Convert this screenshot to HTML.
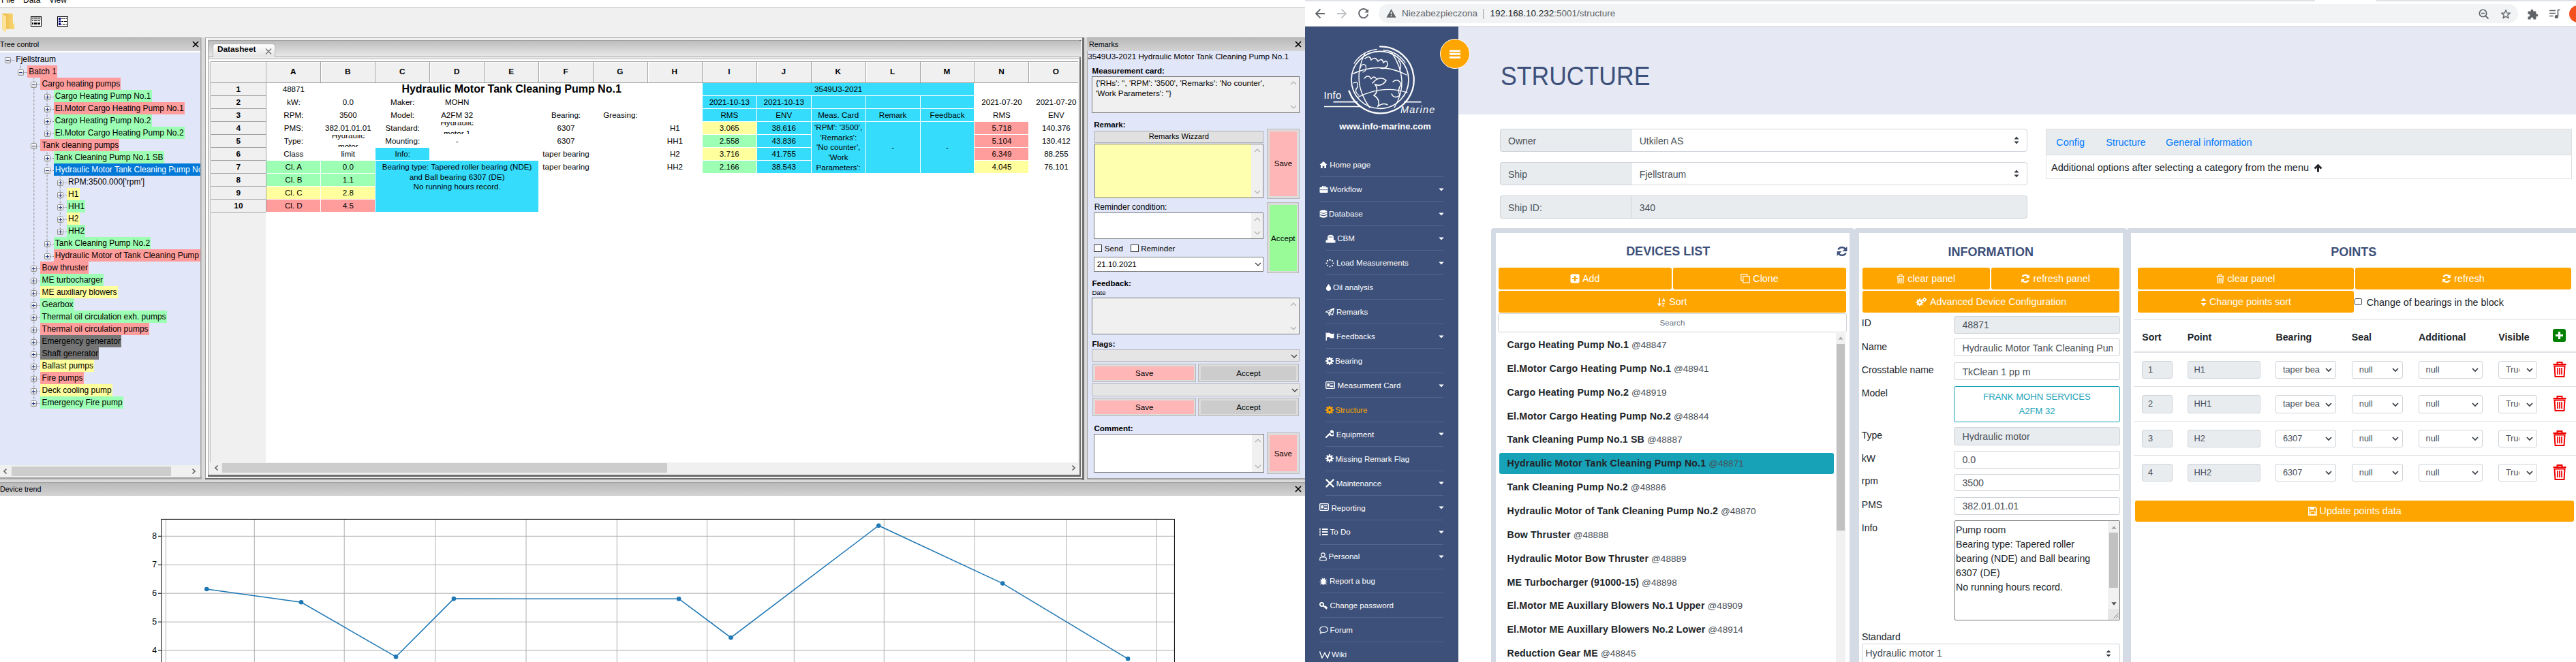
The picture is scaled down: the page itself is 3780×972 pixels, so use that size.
<!DOCTYPE html>
<html><head><meta charset="utf-8"><style>
html,body{margin:0;padding:0;width:3780px;height:972px;overflow:hidden;background:#fff}
body{position:relative;font-family:"Liberation Sans",sans-serif;color:#000}
body div, body svg{position:absolute}
</style></head><body>
<div style="left:0px;top:0px;width:1915px;height:972px;background:#f0f0f0"></div>
<div style="left:0px;top:0px;width:1915px;height:11px;background:#ffffff"></div>
<div style="left:0px;top:11px;width:1915px;height:1px;background:#b4b4b4"></div>
<div style="left:2px;top:-6px;font-size:12px;line-height:12px;color:#000">File</div>
<div style="left:34px;top:-6px;font-size:12px;line-height:12px;color:#000">Data</div>
<div style="left:72px;top:-6px;font-size:12px;line-height:12px;color:#000">View</div>
<svg style="left:0px;top:14px" width="24" height="36" viewBox="0 14 24 36">
<defs><linearGradient id="fg" x1="0" y1="0" x2="1" y2="0"><stop offset="0" stop-color="#e9b845"/><stop offset="1" stop-color="#f9d877"/></linearGradient></defs>
<path d="M3.4 19.7 H18.9 V33.8 L21.2 35.5 V42.7 H8.5 V47 L3.4 43 Z" fill="url(#fg)"/>
<path d="M3.4 19.7 L9 24.5 V47 L3.4 43 Z" fill="#fde39a"/>
</svg>
<svg style="left:44px;top:23px" width="18" height="17" viewBox="44 23 18 17" shape-rendering="crispEdges">
<rect x="45" y="24" width="16" height="15" fill="#000"/>
<rect x="46" y="25" width="14" height="13" fill="#fff"/>
<rect x="46" y="25" width="14" height="4" fill="#c8c8c8"/>
<g fill="#000"><rect x="47" y="26" width="2" height="1"/><rect x="50" y="26" width="4" height="1"/><rect x="55" y="26" width="4" height="1"/>
<rect x="47" y="30" width="2" height="1"/><rect x="50" y="30" width="4" height="1"/><rect x="55" y="30" width="4" height="1"/>
<rect x="47" y="32" width="2" height="1"/><rect x="50" y="32" width="4" height="1"/><rect x="55" y="32" width="4" height="1"/>
<rect x="47" y="34" width="2" height="1"/><rect x="50" y="34" width="4" height="1"/><rect x="55" y="34" width="4" height="1"/>
<rect x="47" y="36" width="2" height="1"/><rect x="50" y="36" width="4" height="1"/><rect x="55" y="36" width="4" height="1"/></g>
</svg>
<svg style="left:83px;top:23px" width="18" height="17" viewBox="83 23 18 17" shape-rendering="crispEdges">
<rect x="84" y="24" width="16" height="15" fill="#000"/>
<rect x="85" y="25" width="14" height="13" fill="#fff"/>
<g fill="#000080"><rect x="86" y="26" width="3" height="3"/><rect x="86" y="30" width="3" height="3"/><rect x="86" y="34" width="3" height="3"/></g>
<g fill="#000"><rect x="90" y="27" width="2" height="1"/><rect x="93" y="27" width="3" height="1"/><rect x="97" y="27" width="1" height="1"/>
<rect x="90" y="31" width="3" height="1"/><rect x="94" y="31" width="4" height="1"/>
<rect x="90" y="35" width="1" height="1"/><rect x="92" y="35" width="4" height="1"/><rect x="97" y="35" width="1" height="1"/></g>
</svg>
<div style="left:0px;top:55px;width:1915px;height:917px;background:#dadada"></div>
<div style="left:0px;top:55px;width:296px;height:20px;background:linear-gradient(#b9b9b9,#d3d3d3);border-top:1px solid #a0a0a0;box-sizing:border-box"></div>
<div style="left:0px;top:59.60px;height:10.8px;line-height:10.8px;font-size:10.8px;white-space:pre;color:#000">Tree control</div>
<svg style="left:282px;top:60px" width="10" height="10" viewBox="0 0 10 10"><path d="M1 1 L9 9 M9 1 L1 9" stroke="#000" stroke-width="1.7"/></svg>
<div style="left:0px;top:75px;width:294px;height:608px;background:#e1e6f8"></div>
<div style="left:0px;top:75px;width:294px;height:1.5px;background:#ffffff"></div>
<div style="left:294px;top:55px;width:2px;height:649px;background:linear-gradient(90deg,#9a9a9a,#c8c8c8)"></div>
<div style="left:0px;top:683px;width:294px;height:18px;background:#f0f0f0"></div>
<div style="left:17px;top:685px;width:234px;height:14px;background:#cdcdcd"></div>
<svg style="left:3px;top:687px" width="10" height="10" viewBox="0 0 10 10"><path d="M6.5 1.5 L3 5 L6.5 8.5" stroke="#606060" stroke-width="1.6" fill="none"/></svg>
<svg style="left:279px;top:687px" width="10" height="10" viewBox="0 0 10 10"><path d="M3.5 1.5 L7 5 L3.5 8.5" stroke="#606060" stroke-width="1.6" fill="none"/></svg>
<div style="left:0px;top:701px;width:296px;height:3px;background:linear-gradient(#8c8c8c,#c0c0c0)"></div>
<div style="left:0;top:75px;width:294px;height:608px;overflow:hidden">
<svg style="left:0;top:0" width="294" height="608"><line x1="16.3" y1="13.5" x2="21.3" y2="13.5" stroke="#808080" stroke-dasharray="1 1"/><line x1="35.55" y1="31.5" x2="40.55" y2="31.5" stroke="#808080" stroke-dasharray="1 1"/><line x1="54.8" y1="49.5" x2="59.8" y2="49.5" stroke="#808080" stroke-dasharray="1 1"/><line x1="74.05" y1="67.5" x2="79.05" y2="67.5" stroke="#808080" stroke-dasharray="1 1"/><line x1="74.05" y1="85.5" x2="79.05" y2="85.5" stroke="#808080" stroke-dasharray="1 1"/><line x1="74.05" y1="103.5" x2="79.05" y2="103.5" stroke="#808080" stroke-dasharray="1 1"/><line x1="74.05" y1="121.5" x2="79.05" y2="121.5" stroke="#808080" stroke-dasharray="1 1"/><line x1="54.8" y1="139.5" x2="59.8" y2="139.5" stroke="#808080" stroke-dasharray="1 1"/><line x1="74.05" y1="157.5" x2="79.05" y2="157.5" stroke="#808080" stroke-dasharray="1 1"/><line x1="74.05" y1="175.5" x2="79.05" y2="175.5" stroke="#808080" stroke-dasharray="1 1"/><line x1="93.3" y1="193.5" x2="98.3" y2="193.5" stroke="#808080" stroke-dasharray="1 1"/><line x1="93.3" y1="211.5" x2="98.3" y2="211.5" stroke="#808080" stroke-dasharray="1 1"/><line x1="93.3" y1="229.5" x2="98.3" y2="229.5" stroke="#808080" stroke-dasharray="1 1"/><line x1="93.3" y1="247.5" x2="98.3" y2="247.5" stroke="#808080" stroke-dasharray="1 1"/><line x1="93.3" y1="265.5" x2="98.3" y2="265.5" stroke="#808080" stroke-dasharray="1 1"/><line x1="74.05" y1="283.5" x2="79.05" y2="283.5" stroke="#808080" stroke-dasharray="1 1"/><line x1="74.05" y1="301.5" x2="79.05" y2="301.5" stroke="#808080" stroke-dasharray="1 1"/><line x1="54.8" y1="319.5" x2="59.8" y2="319.5" stroke="#808080" stroke-dasharray="1 1"/><line x1="54.8" y1="337.5" x2="59.8" y2="337.5" stroke="#808080" stroke-dasharray="1 1"/><line x1="54.8" y1="355.5" x2="59.8" y2="355.5" stroke="#808080" stroke-dasharray="1 1"/><line x1="54.8" y1="373.5" x2="59.8" y2="373.5" stroke="#808080" stroke-dasharray="1 1"/><line x1="54.8" y1="391.5" x2="59.8" y2="391.5" stroke="#808080" stroke-dasharray="1 1"/><line x1="54.8" y1="409.5" x2="59.8" y2="409.5" stroke="#808080" stroke-dasharray="1 1"/><line x1="54.8" y1="427.5" x2="59.8" y2="427.5" stroke="#808080" stroke-dasharray="1 1"/><line x1="54.8" y1="445.5" x2="59.8" y2="445.5" stroke="#808080" stroke-dasharray="1 1"/><line x1="54.8" y1="463.5" x2="59.8" y2="463.5" stroke="#808080" stroke-dasharray="1 1"/><line x1="54.8" y1="481.5" x2="59.8" y2="481.5" stroke="#808080" stroke-dasharray="1 1"/><line x1="54.8" y1="499.5" x2="59.8" y2="499.5" stroke="#808080" stroke-dasharray="1 1"/><line x1="54.8" y1="517.5" x2="59.8" y2="517.5" stroke="#808080" stroke-dasharray="1 1"/><line x1="30.55" y1="18" x2="30.55" y2="27" stroke="#808080" stroke-dasharray="1 1"/><line x1="49.8" y1="36" x2="49.8" y2="513" stroke="#808080" stroke-dasharray="1 1"/><line x1="69.05" y1="54" x2="69.05" y2="117" stroke="#808080" stroke-dasharray="1 1"/><line x1="69.05" y1="144" x2="69.05" y2="297" stroke="#808080" stroke-dasharray="1 1"/><line x1="88.3" y1="180" x2="88.3" y2="261" stroke="#808080" stroke-dasharray="1 1"/></svg>
<div style="left:21px;top:3px;height:18px;line-height:18px;font-size:12px;padding:0 1.2px 0 2.3px;color:#000;white-space:pre">Fjellstraum</div>
<svg style="left:6.8px;top:9px" width="9" height="9" viewBox="0 0 9 9"><defs></defs><rect x="0.5" y="0.5" width="8" height="8" rx="1" fill="url(#exg)" stroke="#919191"/><line x1="2" y1="4.5" x2="7" y2="4.5" stroke="#2b3d8f" stroke-width="1"/></svg>
<div style="left:40.0px;top:21px;height:18px;line-height:18px;font-size:12px;padding:0 1.2px 0 2.3px;background:#ff9d9d;color:#000;white-space:pre">Batch 1</div>
<svg style="left:26.05px;top:27px" width="9" height="9" viewBox="0 0 9 9"><defs></defs><rect x="0.5" y="0.5" width="8" height="8" rx="1" fill="url(#exg)" stroke="#919191"/><line x1="2" y1="4.5" x2="7" y2="4.5" stroke="#2b3d8f" stroke-width="1"/></svg>
<div style="left:59.25px;top:39px;height:18px;line-height:18px;font-size:12px;padding:0 1.2px 0 2.3px;background:#ff9d9d;color:#000;white-space:pre">Cargo heating pumps</div>
<svg style="left:45.3px;top:45px" width="9" height="9" viewBox="0 0 9 9"><defs></defs><rect x="0.5" y="0.5" width="8" height="8" rx="1" fill="url(#exg)" stroke="#919191"/><line x1="2" y1="4.5" x2="7" y2="4.5" stroke="#2b3d8f" stroke-width="1"/></svg>
<div style="left:78.5px;top:57px;height:18px;line-height:18px;font-size:12px;padding:0 1.2px 0 2.3px;background:#9dffb4;color:#000;white-space:pre">Cargo Heating Pump No.1</div>
<svg style="left:64.55px;top:63px" width="9" height="9" viewBox="0 0 9 9"><defs></defs><rect x="0.5" y="0.5" width="8" height="8" rx="1" fill="url(#exg)" stroke="#919191"/><line x1="2" y1="4.5" x2="7" y2="4.5" stroke="#2b3d8f" stroke-width="1"/><line x1="4.5" y1="2" x2="4.5" y2="7" stroke="#2b3d8f" stroke-width="1"/></svg>
<div style="left:78.5px;top:75px;height:18px;line-height:18px;font-size:12px;padding:0 1.2px 0 2.3px;background:#ff9d9d;color:#000;white-space:pre">El.Motor Cargo Heating Pump No.1</div>
<svg style="left:64.55px;top:81px" width="9" height="9" viewBox="0 0 9 9"><defs></defs><rect x="0.5" y="0.5" width="8" height="8" rx="1" fill="url(#exg)" stroke="#919191"/><line x1="2" y1="4.5" x2="7" y2="4.5" stroke="#2b3d8f" stroke-width="1"/><line x1="4.5" y1="2" x2="4.5" y2="7" stroke="#2b3d8f" stroke-width="1"/></svg>
<div style="left:78.5px;top:93px;height:18px;line-height:18px;font-size:12px;padding:0 1.2px 0 2.3px;background:#9dffb4;color:#000;white-space:pre">Cargo Heating Pump No.2</div>
<svg style="left:64.55px;top:99px" width="9" height="9" viewBox="0 0 9 9"><defs></defs><rect x="0.5" y="0.5" width="8" height="8" rx="1" fill="url(#exg)" stroke="#919191"/><line x1="2" y1="4.5" x2="7" y2="4.5" stroke="#2b3d8f" stroke-width="1"/><line x1="4.5" y1="2" x2="4.5" y2="7" stroke="#2b3d8f" stroke-width="1"/></svg>
<div style="left:78.5px;top:111px;height:18px;line-height:18px;font-size:12px;padding:0 1.2px 0 2.3px;background:#9dffb4;color:#000;white-space:pre">El.Motor Cargo Heating Pump No.2</div>
<svg style="left:64.55px;top:117px" width="9" height="9" viewBox="0 0 9 9"><defs></defs><rect x="0.5" y="0.5" width="8" height="8" rx="1" fill="url(#exg)" stroke="#919191"/><line x1="2" y1="4.5" x2="7" y2="4.5" stroke="#2b3d8f" stroke-width="1"/><line x1="4.5" y1="2" x2="4.5" y2="7" stroke="#2b3d8f" stroke-width="1"/></svg>
<div style="left:59.25px;top:129px;height:18px;line-height:18px;font-size:12px;padding:0 1.2px 0 2.3px;background:#ff9d9d;color:#000;white-space:pre">Tank cleaning pumps</div>
<svg style="left:45.3px;top:135px" width="9" height="9" viewBox="0 0 9 9"><defs></defs><rect x="0.5" y="0.5" width="8" height="8" rx="1" fill="url(#exg)" stroke="#919191"/><line x1="2" y1="4.5" x2="7" y2="4.5" stroke="#2b3d8f" stroke-width="1"/></svg>
<div style="left:78.5px;top:147px;height:18px;line-height:18px;font-size:12px;padding:0 1.2px 0 2.3px;background:#9dffb4;color:#000;white-space:pre">Tank Cleaning Pump No.1 SB</div>
<svg style="left:64.55px;top:153px" width="9" height="9" viewBox="0 0 9 9"><defs></defs><rect x="0.5" y="0.5" width="8" height="8" rx="1" fill="url(#exg)" stroke="#919191"/><line x1="2" y1="4.5" x2="7" y2="4.5" stroke="#2b3d8f" stroke-width="1"/><line x1="4.5" y1="2" x2="4.5" y2="7" stroke="#2b3d8f" stroke-width="1"/></svg>
<div style="left:78.5px;top:165px;height:18px;line-height:18px;font-size:12px;padding:0 1.2px 0 2.3px;background:#0078d7;color:#fff;white-space:pre">Hydraulic Motor Tank Cleaning Pump No.1</div>
<svg style="left:64.55px;top:171px" width="9" height="9" viewBox="0 0 9 9"><defs></defs><rect x="0.5" y="0.5" width="8" height="8" rx="1" fill="url(#exg)" stroke="#919191"/><line x1="2" y1="4.5" x2="7" y2="4.5" stroke="#2b3d8f" stroke-width="1"/></svg>
<div style="left:97.75px;top:183px;height:18px;line-height:18px;font-size:12px;padding:0 1.2px 0 2.3px;color:#000;white-space:pre">RPM:3500.000['rpm']</div>
<svg style="left:83.8px;top:189px" width="9" height="9" viewBox="0 0 9 9"><defs></defs><rect x="0.5" y="0.5" width="8" height="8" rx="1" fill="url(#exg)" stroke="#919191"/><line x1="2" y1="4.5" x2="7" y2="4.5" stroke="#2b3d8f" stroke-width="1"/><line x1="4.5" y1="2" x2="4.5" y2="7" stroke="#2b3d8f" stroke-width="1"/></svg>
<div style="left:97.75px;top:201px;height:18px;line-height:18px;font-size:12px;padding:0 1.2px 0 2.3px;background:#ffff9d;color:#000;white-space:pre">H1</div>
<svg style="left:83.8px;top:207px" width="9" height="9" viewBox="0 0 9 9"><defs></defs><rect x="0.5" y="0.5" width="8" height="8" rx="1" fill="url(#exg)" stroke="#919191"/><line x1="2" y1="4.5" x2="7" y2="4.5" stroke="#2b3d8f" stroke-width="1"/><line x1="4.5" y1="2" x2="4.5" y2="7" stroke="#2b3d8f" stroke-width="1"/></svg>
<div style="left:97.75px;top:219px;height:18px;line-height:18px;font-size:12px;padding:0 1.2px 0 2.3px;background:#9dffb4;color:#000;white-space:pre">HH1</div>
<svg style="left:83.8px;top:225px" width="9" height="9" viewBox="0 0 9 9"><defs></defs><rect x="0.5" y="0.5" width="8" height="8" rx="1" fill="url(#exg)" stroke="#919191"/><line x1="2" y1="4.5" x2="7" y2="4.5" stroke="#2b3d8f" stroke-width="1"/><line x1="4.5" y1="2" x2="4.5" y2="7" stroke="#2b3d8f" stroke-width="1"/></svg>
<div style="left:97.75px;top:237px;height:18px;line-height:18px;font-size:12px;padding:0 1.2px 0 2.3px;background:#ffff9d;color:#000;white-space:pre">H2</div>
<svg style="left:83.8px;top:243px" width="9" height="9" viewBox="0 0 9 9"><defs></defs><rect x="0.5" y="0.5" width="8" height="8" rx="1" fill="url(#exg)" stroke="#919191"/><line x1="2" y1="4.5" x2="7" y2="4.5" stroke="#2b3d8f" stroke-width="1"/><line x1="4.5" y1="2" x2="4.5" y2="7" stroke="#2b3d8f" stroke-width="1"/></svg>
<div style="left:97.75px;top:255px;height:18px;line-height:18px;font-size:12px;padding:0 1.2px 0 2.3px;background:#9dffb4;color:#000;white-space:pre">HH2</div>
<svg style="left:83.8px;top:261px" width="9" height="9" viewBox="0 0 9 9"><defs></defs><rect x="0.5" y="0.5" width="8" height="8" rx="1" fill="url(#exg)" stroke="#919191"/><line x1="2" y1="4.5" x2="7" y2="4.5" stroke="#2b3d8f" stroke-width="1"/><line x1="4.5" y1="2" x2="4.5" y2="7" stroke="#2b3d8f" stroke-width="1"/></svg>
<div style="left:78.5px;top:273px;height:18px;line-height:18px;font-size:12px;padding:0 1.2px 0 2.3px;background:#9dffb4;color:#000;white-space:pre">Tank Cleaning Pump No.2</div>
<svg style="left:64.55px;top:279px" width="9" height="9" viewBox="0 0 9 9"><defs></defs><rect x="0.5" y="0.5" width="8" height="8" rx="1" fill="url(#exg)" stroke="#919191"/><line x1="2" y1="4.5" x2="7" y2="4.5" stroke="#2b3d8f" stroke-width="1"/><line x1="4.5" y1="2" x2="4.5" y2="7" stroke="#2b3d8f" stroke-width="1"/></svg>
<div style="left:78.5px;top:291px;height:18px;line-height:18px;font-size:12px;padding:0 1.2px 0 2.3px;background:#ff9d9d;color:#000;white-space:pre">Hydraulic Motor of Tank Cleaning Pump No.2</div>
<svg style="left:64.55px;top:297px" width="9" height="9" viewBox="0 0 9 9"><defs></defs><rect x="0.5" y="0.5" width="8" height="8" rx="1" fill="url(#exg)" stroke="#919191"/><line x1="2" y1="4.5" x2="7" y2="4.5" stroke="#2b3d8f" stroke-width="1"/><line x1="4.5" y1="2" x2="4.5" y2="7" stroke="#2b3d8f" stroke-width="1"/></svg>
<div style="left:59.25px;top:309px;height:18px;line-height:18px;font-size:12px;padding:0 1.2px 0 2.3px;background:#ff9d9d;color:#000;white-space:pre">Bow thruster</div>
<svg style="left:45.3px;top:315px" width="9" height="9" viewBox="0 0 9 9"><defs></defs><rect x="0.5" y="0.5" width="8" height="8" rx="1" fill="url(#exg)" stroke="#919191"/><line x1="2" y1="4.5" x2="7" y2="4.5" stroke="#2b3d8f" stroke-width="1"/><line x1="4.5" y1="2" x2="4.5" y2="7" stroke="#2b3d8f" stroke-width="1"/></svg>
<div style="left:59.25px;top:327px;height:18px;line-height:18px;font-size:12px;padding:0 1.2px 0 2.3px;background:#9dffb4;color:#000;white-space:pre">ME turbocharger</div>
<svg style="left:45.3px;top:333px" width="9" height="9" viewBox="0 0 9 9"><defs></defs><rect x="0.5" y="0.5" width="8" height="8" rx="1" fill="url(#exg)" stroke="#919191"/><line x1="2" y1="4.5" x2="7" y2="4.5" stroke="#2b3d8f" stroke-width="1"/><line x1="4.5" y1="2" x2="4.5" y2="7" stroke="#2b3d8f" stroke-width="1"/></svg>
<div style="left:59.25px;top:345px;height:18px;line-height:18px;font-size:12px;padding:0 1.2px 0 2.3px;background:#ffff9d;color:#000;white-space:pre">ME auxiliary blowers</div>
<svg style="left:45.3px;top:351px" width="9" height="9" viewBox="0 0 9 9"><defs></defs><rect x="0.5" y="0.5" width="8" height="8" rx="1" fill="url(#exg)" stroke="#919191"/><line x1="2" y1="4.5" x2="7" y2="4.5" stroke="#2b3d8f" stroke-width="1"/><line x1="4.5" y1="2" x2="4.5" y2="7" stroke="#2b3d8f" stroke-width="1"/></svg>
<div style="left:59.25px;top:363px;height:18px;line-height:18px;font-size:12px;padding:0 1.2px 0 2.3px;background:#9dffb4;color:#000;white-space:pre">Gearbox</div>
<svg style="left:45.3px;top:369px" width="9" height="9" viewBox="0 0 9 9"><defs></defs><rect x="0.5" y="0.5" width="8" height="8" rx="1" fill="url(#exg)" stroke="#919191"/><line x1="2" y1="4.5" x2="7" y2="4.5" stroke="#2b3d8f" stroke-width="1"/><line x1="4.5" y1="2" x2="4.5" y2="7" stroke="#2b3d8f" stroke-width="1"/></svg>
<div style="left:59.25px;top:381px;height:18px;line-height:18px;font-size:12px;padding:0 1.2px 0 2.3px;background:#9dffb4;color:#000;white-space:pre">Thermal oil circulation exh. pumps</div>
<svg style="left:45.3px;top:387px" width="9" height="9" viewBox="0 0 9 9"><defs></defs><rect x="0.5" y="0.5" width="8" height="8" rx="1" fill="url(#exg)" stroke="#919191"/><line x1="2" y1="4.5" x2="7" y2="4.5" stroke="#2b3d8f" stroke-width="1"/><line x1="4.5" y1="2" x2="4.5" y2="7" stroke="#2b3d8f" stroke-width="1"/></svg>
<div style="left:59.25px;top:399px;height:18px;line-height:18px;font-size:12px;padding:0 1.2px 0 2.3px;background:#ff9d9d;color:#000;white-space:pre">Thermal oil circulation pumps</div>
<svg style="left:45.3px;top:405px" width="9" height="9" viewBox="0 0 9 9"><defs></defs><rect x="0.5" y="0.5" width="8" height="8" rx="1" fill="url(#exg)" stroke="#919191"/><line x1="2" y1="4.5" x2="7" y2="4.5" stroke="#2b3d8f" stroke-width="1"/><line x1="4.5" y1="2" x2="4.5" y2="7" stroke="#2b3d8f" stroke-width="1"/></svg>
<div style="left:59.25px;top:417px;height:18px;line-height:18px;font-size:12px;padding:0 1.2px 0 2.3px;background:#757575;color:#000;white-space:pre">Emergency generator</div>
<svg style="left:45.3px;top:423px" width="9" height="9" viewBox="0 0 9 9"><defs></defs><rect x="0.5" y="0.5" width="8" height="8" rx="1" fill="url(#exg)" stroke="#919191"/><line x1="2" y1="4.5" x2="7" y2="4.5" stroke="#2b3d8f" stroke-width="1"/><line x1="4.5" y1="2" x2="4.5" y2="7" stroke="#2b3d8f" stroke-width="1"/></svg>
<div style="left:59.25px;top:435px;height:18px;line-height:18px;font-size:12px;padding:0 1.2px 0 2.3px;background:#757575;color:#000;white-space:pre">Shaft generator</div>
<svg style="left:45.3px;top:441px" width="9" height="9" viewBox="0 0 9 9"><defs></defs><rect x="0.5" y="0.5" width="8" height="8" rx="1" fill="url(#exg)" stroke="#919191"/><line x1="2" y1="4.5" x2="7" y2="4.5" stroke="#2b3d8f" stroke-width="1"/><line x1="4.5" y1="2" x2="4.5" y2="7" stroke="#2b3d8f" stroke-width="1"/></svg>
<div style="left:59.25px;top:453px;height:18px;line-height:18px;font-size:12px;padding:0 1.2px 0 2.3px;background:#ffff9d;color:#000;white-space:pre">Ballast pumps</div>
<svg style="left:45.3px;top:459px" width="9" height="9" viewBox="0 0 9 9"><defs></defs><rect x="0.5" y="0.5" width="8" height="8" rx="1" fill="url(#exg)" stroke="#919191"/><line x1="2" y1="4.5" x2="7" y2="4.5" stroke="#2b3d8f" stroke-width="1"/><line x1="4.5" y1="2" x2="4.5" y2="7" stroke="#2b3d8f" stroke-width="1"/></svg>
<div style="left:59.25px;top:471px;height:18px;line-height:18px;font-size:12px;padding:0 1.2px 0 2.3px;background:#ff9d9d;color:#000;white-space:pre">Fire pumps</div>
<svg style="left:45.3px;top:477px" width="9" height="9" viewBox="0 0 9 9"><defs></defs><rect x="0.5" y="0.5" width="8" height="8" rx="1" fill="url(#exg)" stroke="#919191"/><line x1="2" y1="4.5" x2="7" y2="4.5" stroke="#2b3d8f" stroke-width="1"/><line x1="4.5" y1="2" x2="4.5" y2="7" stroke="#2b3d8f" stroke-width="1"/></svg>
<div style="left:59.25px;top:489px;height:18px;line-height:18px;font-size:12px;padding:0 1.2px 0 2.3px;background:#ffff9d;color:#000;white-space:pre">Deck cooling pump</div>
<svg style="left:45.3px;top:495px" width="9" height="9" viewBox="0 0 9 9"><defs></defs><rect x="0.5" y="0.5" width="8" height="8" rx="1" fill="url(#exg)" stroke="#919191"/><line x1="2" y1="4.5" x2="7" y2="4.5" stroke="#2b3d8f" stroke-width="1"/><line x1="4.5" y1="2" x2="4.5" y2="7" stroke="#2b3d8f" stroke-width="1"/></svg>
<div style="left:59.25px;top:507px;height:18px;line-height:18px;font-size:12px;padding:0 1.2px 0 2.3px;background:#9dffb4;color:#000;white-space:pre">Emergency Fire pump</div>
<svg style="left:45.3px;top:513px" width="9" height="9" viewBox="0 0 9 9"><defs></defs><rect x="0.5" y="0.5" width="8" height="8" rx="1" fill="url(#exg)" stroke="#919191"/><line x1="2" y1="4.5" x2="7" y2="4.5" stroke="#2b3d8f" stroke-width="1"/><line x1="4.5" y1="2" x2="4.5" y2="7" stroke="#2b3d8f" stroke-width="1"/></svg>
</div>
<svg style="left:0;top:0" width="0" height="0"><defs><linearGradient id="exg" x1="0" y1="0" x2="0" y2="1"><stop offset="0" stop-color="#ffffff"/><stop offset="1" stop-color="#d4d4d4"/></linearGradient></defs></svg>
<div style="left:301px;top:55px;width:1290px;height:649px;background:#f0f0f0;border-left:1px solid #a0a0a0;border-top:1px solid #a0a0a0;box-sizing:border-box"></div>
<div style="left:302px;top:56px;width:3px;height:646px;background:#fff"></div>
<div style="left:1588.3px;top:55px;width:2.4px;height:649.5px;background:#707070"></div>
<div style="left:301px;top:702px;width:1290px;height:2.4px;background:#707070"></div>
<div style="left:305px;top:59px;width:1282px;height:641px;border-left:1px solid #a0a0a0;border-top:1px solid #a0a0a0;box-sizing:border-box"></div>
<div style="left:1584.3px;top:59px;width:2px;height:641px;background:#6e6e6e"></div>
<div style="left:305px;top:697.3px;width:1281.3px;height:2.4px;background:#6e6e6e"></div>
<div style="left:306px;top:60px;width:1280px;height:23.3px;background:linear-gradient(#bdbdbd,#e8e8e8)"></div>
<div style="left:306px;top:83px;width:1280px;height:1px;background:#a8a8a8"></div>
<div style="left:306px;top:86px;width:1280px;height:1px;background:#a8a8a8"></div>
<div style="left:311.5px;top:63.7px;width:92px;height:20px;box-sizing:border-box;border:1px solid #b4b4b4;border-bottom:none;border-radius:4px 4px 0 0;background:linear-gradient(#ffffff,#e4e4e4)"></div>
<div style="left:319px;top:66.60px;height:11.8px;line-height:11.8px;font-size:11.8px;white-space:pre;font-weight:bold;color:#000">Datasheet</div>
<svg style="left:388.5px;top:70.5px" width="10" height="9" viewBox="0 0 10 9"><path d="M1 0.5 L9 8.5 M9 0.5 L1 8.5" stroke="#6e6e6e" stroke-width="1.2"/></svg>
<div style="left:309.4px;top:89.9px;width:1272.6px;height:589.1px;background:#ffffff"></div>
<div style="left:309.4px;top:89.9px;width:1px;height:589.1px;background:#a0a0a0"></div>
<div style="left:309.4px;top:89.9px;width:1272.6px;height:1px;background:#a0a0a0"></div>
<div style="left:310.4px;top:90.9px;width:80.0px;height:588.1px;background:#f0f0f0"></div>
<div style="left:390.4px;top:90.9px;width:1191.6px;height:30.39999999999999px;background:#f0f0f0"></div>
<div style="left:306px;top:86.5px;width:1278px;height:3.4000000000000057px;background:#fff"></div>
<div style="left:310.4px;top:90.9px;width:1271.6px;height:1px;background:#fff"></div>
<div style="left:310.4px;top:90.9px;width:1px;height:588.1px;background:#fff"></div>
<div style="left:390.4px;top:89.9px;width:1px;height:31.39999999999999px;background:#a0a0a0"></div>
<div style="left:391.4px;top:90.9px;width:1px;height:29.39999999999999px;background:#fff"></div>
<div style="left:390.4px;top:100.10px;height:11.8px;line-height:11.8px;font-size:11.8px;white-space:pre;width:79.93px;text-align:center;font-weight:bold">A</div>
<div style="left:470.33px;top:89.9px;width:1px;height:31.39999999999999px;background:#a0a0a0"></div>
<div style="left:471.33px;top:90.9px;width:1px;height:29.39999999999999px;background:#fff"></div>
<div style="left:470.33px;top:100.10px;height:11.8px;line-height:11.8px;font-size:11.8px;white-space:pre;width:79.93px;text-align:center;font-weight:bold">B</div>
<div style="left:550.26px;top:89.9px;width:1px;height:31.39999999999999px;background:#a0a0a0"></div>
<div style="left:551.26px;top:90.9px;width:1px;height:29.39999999999999px;background:#fff"></div>
<div style="left:550.26px;top:100.10px;height:11.8px;line-height:11.8px;font-size:11.8px;white-space:pre;width:79.93000000000006px;text-align:center;font-weight:bold">C</div>
<div style="left:630.19px;top:89.9px;width:1px;height:31.39999999999999px;background:#a0a0a0"></div>
<div style="left:631.19px;top:90.9px;width:1px;height:29.39999999999999px;background:#fff"></div>
<div style="left:630.19px;top:100.10px;height:11.8px;line-height:11.8px;font-size:11.8px;white-space:pre;width:79.93000000000006px;text-align:center;font-weight:bold">D</div>
<div style="left:710.12px;top:89.9px;width:1px;height:31.39999999999999px;background:#a0a0a0"></div>
<div style="left:711.12px;top:90.9px;width:1px;height:29.39999999999999px;background:#fff"></div>
<div style="left:710.12px;top:100.10px;height:11.8px;line-height:11.8px;font-size:11.8px;white-space:pre;width:79.92999999999995px;text-align:center;font-weight:bold">E</div>
<div style="left:790.05px;top:89.9px;width:1px;height:31.39999999999999px;background:#a0a0a0"></div>
<div style="left:791.05px;top:90.9px;width:1px;height:29.39999999999999px;background:#fff"></div>
<div style="left:790.05px;top:100.10px;height:11.8px;line-height:11.8px;font-size:11.8px;white-space:pre;width:79.93000000000006px;text-align:center;font-weight:bold">F</div>
<div style="left:869.98px;top:89.9px;width:1px;height:31.39999999999999px;background:#a0a0a0"></div>
<div style="left:870.98px;top:90.9px;width:1px;height:29.39999999999999px;background:#fff"></div>
<div style="left:869.98px;top:100.10px;height:11.8px;line-height:11.8px;font-size:11.8px;white-space:pre;width:79.93000000000006px;text-align:center;font-weight:bold">G</div>
<div style="left:949.91px;top:89.9px;width:1px;height:31.39999999999999px;background:#a0a0a0"></div>
<div style="left:950.91px;top:90.9px;width:1px;height:29.39999999999999px;background:#fff"></div>
<div style="left:949.91px;top:100.10px;height:11.8px;line-height:11.8px;font-size:11.8px;white-space:pre;width:79.92999999999995px;text-align:center;font-weight:bold">H</div>
<div style="left:1029.8400000000001px;top:89.9px;width:1px;height:31.39999999999999px;background:#a0a0a0"></div>
<div style="left:1030.8400000000001px;top:90.9px;width:1px;height:29.39999999999999px;background:#fff"></div>
<div style="left:1029.8400000000001px;top:100.10px;height:11.8px;line-height:11.8px;font-size:11.8px;white-space:pre;width:79.93000000000006px;text-align:center;font-weight:bold">I</div>
<div style="left:1109.77px;top:89.9px;width:1px;height:31.39999999999999px;background:#a0a0a0"></div>
<div style="left:1110.77px;top:90.9px;width:1px;height:29.39999999999999px;background:#fff"></div>
<div style="left:1109.77px;top:100.10px;height:11.8px;line-height:11.8px;font-size:11.8px;white-space:pre;width:79.93000000000006px;text-align:center;font-weight:bold">J</div>
<div style="left:1189.7px;top:89.9px;width:1px;height:31.39999999999999px;background:#a0a0a0"></div>
<div style="left:1190.7px;top:90.9px;width:1px;height:29.39999999999999px;background:#fff"></div>
<div style="left:1189.7px;top:100.10px;height:11.8px;line-height:11.8px;font-size:11.8px;white-space:pre;width:79.93000000000006px;text-align:center;font-weight:bold">K</div>
<div style="left:1269.63px;top:89.9px;width:1px;height:31.39999999999999px;background:#a0a0a0"></div>
<div style="left:1270.63px;top:90.9px;width:1px;height:29.39999999999999px;background:#fff"></div>
<div style="left:1269.63px;top:100.10px;height:11.8px;line-height:11.8px;font-size:11.8px;white-space:pre;width:79.93000000000006px;text-align:center;font-weight:bold">L</div>
<div style="left:1349.56px;top:89.9px;width:1px;height:31.39999999999999px;background:#a0a0a0"></div>
<div style="left:1350.56px;top:90.9px;width:1px;height:29.39999999999999px;background:#fff"></div>
<div style="left:1349.56px;top:100.10px;height:11.8px;line-height:11.8px;font-size:11.8px;white-space:pre;width:79.93000000000006px;text-align:center;font-weight:bold">M</div>
<div style="left:1429.4900000000002px;top:89.9px;width:1px;height:31.39999999999999px;background:#a0a0a0"></div>
<div style="left:1430.4900000000002px;top:90.9px;width:1px;height:29.39999999999999px;background:#fff"></div>
<div style="left:1429.4900000000002px;top:100.10px;height:11.8px;line-height:11.8px;font-size:11.8px;white-space:pre;width:79.93000000000006px;text-align:center;font-weight:bold">N</div>
<div style="left:1509.42px;top:89.9px;width:1px;height:31.39999999999999px;background:#a0a0a0"></div>
<div style="left:1510.42px;top:90.9px;width:1px;height:29.39999999999999px;background:#fff"></div>
<div style="left:1509.42px;top:100.10px;height:11.8px;line-height:11.8px;font-size:11.8px;white-space:pre;width:79.93000000000006px;text-align:center;font-weight:bold">O</div>
<div style="left:309.4px;top:121.3px;width:1272.6px;height:1px;background:#a0a0a0"></div>
<div style="left:309.4px;top:140.3px;width:81.0px;height:1px;background:#a0a0a0"></div>
<div style="left:309.4px;top:125.90px;height:11.8px;line-height:11.8px;font-size:11.8px;white-space:pre;width:81.0px;text-align:center;font-weight:bold">1</div>
<div style="left:309.4px;top:159.3px;width:81.0px;height:1px;background:#a0a0a0"></div>
<div style="left:309.4px;top:144.90px;height:11.8px;line-height:11.8px;font-size:11.8px;white-space:pre;width:81.0px;text-align:center;font-weight:bold">2</div>
<div style="left:309.4px;top:178.3px;width:81.0px;height:1px;background:#a0a0a0"></div>
<div style="left:309.4px;top:163.90px;height:11.8px;line-height:11.8px;font-size:11.8px;white-space:pre;width:81.0px;text-align:center;font-weight:bold">3</div>
<div style="left:309.4px;top:197.3px;width:81.0px;height:1px;background:#a0a0a0"></div>
<div style="left:309.4px;top:182.90px;height:11.8px;line-height:11.8px;font-size:11.8px;white-space:pre;width:81.0px;text-align:center;font-weight:bold">4</div>
<div style="left:309.4px;top:216.3px;width:81.0px;height:1px;background:#a0a0a0"></div>
<div style="left:309.4px;top:201.90px;height:11.8px;line-height:11.8px;font-size:11.8px;white-space:pre;width:81.0px;text-align:center;font-weight:bold">5</div>
<div style="left:309.4px;top:235.3px;width:81.0px;height:1px;background:#a0a0a0"></div>
<div style="left:309.4px;top:220.90px;height:11.8px;line-height:11.8px;font-size:11.8px;white-space:pre;width:81.0px;text-align:center;font-weight:bold">6</div>
<div style="left:309.4px;top:254.3px;width:81.0px;height:1px;background:#a0a0a0"></div>
<div style="left:309.4px;top:239.90px;height:11.8px;line-height:11.8px;font-size:11.8px;white-space:pre;width:81.0px;text-align:center;font-weight:bold">7</div>
<div style="left:309.4px;top:273.3px;width:81.0px;height:1px;background:#a0a0a0"></div>
<div style="left:309.4px;top:258.90px;height:11.8px;line-height:11.8px;font-size:11.8px;white-space:pre;width:81.0px;text-align:center;font-weight:bold">8</div>
<div style="left:309.4px;top:292.3px;width:81.0px;height:1px;background:#a0a0a0"></div>
<div style="left:309.4px;top:277.90px;height:11.8px;line-height:11.8px;font-size:11.8px;white-space:pre;width:81.0px;text-align:center;font-weight:bold">9</div>
<div style="left:309.4px;top:311.3px;width:81.0px;height:1px;background:#a0a0a0"></div>
<div style="left:309.4px;top:296.90px;height:11.8px;line-height:11.8px;font-size:11.8px;white-space:pre;width:81.0px;text-align:center;font-weight:bold">10</div>
<div style="left:390.4px;top:89.9px;width:1px;height:221.4px;background:#a0a0a0"></div>
<div style="left:391.40px;top:122.30px;width:78.93px;height:18.00px;display:flex;align-items:center;justify-content:center;text-align:center;font-size:11.6px;line-height:14.8px;overflow:hidden;"><span>48871</span></div>
<div style="left:471.33px;top:122.30px;width:558.51px;height:18.00px;display:flex;align-items:center;justify-content:center;text-align:center;font-size:16px;line-height:14.8px;overflow:hidden;font-weight:bold;white-space:nowrap"><span>Hydraulic Motor Tank Cleaning Pump No.1</span></div>
<div style="left:1030.84px;top:122.30px;width:398.65px;height:18.00px;background:#35dcfc;display:flex;align-items:center;justify-content:center;text-align:center;font-size:11.6px;line-height:14.8px;overflow:hidden;"><span>3549U3-2021</span></div>
<div style="left:391.40px;top:141.30px;width:78.93px;height:18.00px;display:flex;align-items:center;justify-content:center;text-align:center;font-size:11.6px;line-height:14.8px;overflow:hidden;"><span>kW:</span></div>
<div style="left:471.33px;top:141.30px;width:78.93px;height:18.00px;display:flex;align-items:center;justify-content:center;text-align:center;font-size:11.6px;line-height:14.8px;overflow:hidden;"><span>0.0</span></div>
<div style="left:551.26px;top:141.30px;width:78.93px;height:18.00px;display:flex;align-items:center;justify-content:center;text-align:center;font-size:11.6px;line-height:14.8px;overflow:hidden;"><span>Maker:</span></div>
<div style="left:631.19px;top:141.30px;width:78.93px;height:18.00px;display:flex;align-items:center;justify-content:center;text-align:center;font-size:11.6px;line-height:14.8px;overflow:hidden;"><span>MOHN</span></div>
<div style="left:1030.84px;top:141.30px;width:78.93px;height:18.00px;background:#35dcfc;display:flex;align-items:center;justify-content:center;text-align:center;font-size:11.6px;line-height:14.8px;overflow:hidden;"><span>2021-10-13</span></div>
<div style="left:1110.77px;top:141.30px;width:78.93px;height:18.00px;background:#35dcfc;display:flex;align-items:center;justify-content:center;text-align:center;font-size:11.6px;line-height:14.8px;overflow:hidden;"><span>2021-10-13</span></div>
<div style="left:1190.70px;top:141.30px;width:78.93px;height:18.00px;background:#35dcfc;display:flex;align-items:center;justify-content:center;text-align:center;font-size:11.6px;line-height:14.8px;overflow:hidden;"><span></span></div>
<div style="left:1270.63px;top:141.30px;width:78.93px;height:18.00px;background:#35dcfc;display:flex;align-items:center;justify-content:center;text-align:center;font-size:11.6px;line-height:14.8px;overflow:hidden;"><span></span></div>
<div style="left:1350.56px;top:141.30px;width:78.93px;height:18.00px;background:#35dcfc;display:flex;align-items:center;justify-content:center;text-align:center;font-size:11.6px;line-height:14.8px;overflow:hidden;"><span></span></div>
<div style="left:1430.49px;top:141.30px;width:78.93px;height:18.00px;display:flex;align-items:center;justify-content:center;text-align:center;font-size:11.6px;line-height:14.8px;overflow:hidden;"><span>2021-07-20</span></div>
<div style="left:1510.42px;top:141.30px;width:78.93px;height:18.00px;display:flex;align-items:center;justify-content:center;text-align:center;font-size:11.6px;line-height:14.8px;overflow:hidden;"><span>2021-07-20</span></div>
<div style="left:391.40px;top:160.30px;width:78.93px;height:18.00px;display:flex;align-items:center;justify-content:center;text-align:center;font-size:11.6px;line-height:14.8px;overflow:hidden;"><span>RPM:</span></div>
<div style="left:471.33px;top:160.30px;width:78.93px;height:18.00px;display:flex;align-items:center;justify-content:center;text-align:center;font-size:11.6px;line-height:14.8px;overflow:hidden;"><span>3500</span></div>
<div style="left:551.26px;top:160.30px;width:78.93px;height:18.00px;display:flex;align-items:center;justify-content:center;text-align:center;font-size:11.6px;line-height:14.8px;overflow:hidden;"><span>Model:</span></div>
<div style="left:631.19px;top:160.30px;width:78.93px;height:18.00px;display:flex;align-items:center;justify-content:center;text-align:center;font-size:11.6px;line-height:14.8px;overflow:hidden;"><span>A2FM 32</span></div>
<div style="left:791.05px;top:160.30px;width:78.93px;height:18.00px;display:flex;align-items:center;justify-content:center;text-align:center;font-size:11.6px;line-height:14.8px;overflow:hidden;"><span>Bearing:</span></div>
<div style="left:870.98px;top:160.30px;width:78.93px;height:18.00px;display:flex;align-items:center;justify-content:center;text-align:center;font-size:11.6px;line-height:14.8px;overflow:hidden;"><span>Greasing:</span></div>
<div style="left:1030.84px;top:160.30px;width:78.93px;height:18.00px;background:#35dcfc;display:flex;align-items:center;justify-content:center;text-align:center;font-size:11.6px;line-height:14.8px;overflow:hidden;"><span>RMS</span></div>
<div style="left:1110.77px;top:160.30px;width:78.93px;height:18.00px;background:#35dcfc;display:flex;align-items:center;justify-content:center;text-align:center;font-size:11.6px;line-height:14.8px;overflow:hidden;"><span>ENV</span></div>
<div style="left:1190.70px;top:160.30px;width:78.93px;height:18.00px;background:#35dcfc;display:flex;align-items:center;justify-content:center;text-align:center;font-size:11.6px;line-height:14.8px;overflow:hidden;"><span>Meas. Card</span></div>
<div style="left:1270.63px;top:160.30px;width:78.93px;height:18.00px;background:#35dcfc;display:flex;align-items:center;justify-content:center;text-align:center;font-size:11.6px;line-height:14.8px;overflow:hidden;"><span>Remark</span></div>
<div style="left:1350.56px;top:160.30px;width:78.93px;height:18.00px;background:#35dcfc;display:flex;align-items:center;justify-content:center;text-align:center;font-size:11.6px;line-height:14.8px;overflow:hidden;"><span>Feedback</span></div>
<div style="left:1430.49px;top:160.30px;width:78.93px;height:18.00px;display:flex;align-items:center;justify-content:center;text-align:center;font-size:11.6px;line-height:14.8px;overflow:hidden;"><span>RMS</span></div>
<div style="left:1510.42px;top:160.30px;width:78.93px;height:18.00px;display:flex;align-items:center;justify-content:center;text-align:center;font-size:11.6px;line-height:14.8px;overflow:hidden;"><span>ENV</span></div>
<div style="left:391.40px;top:179.30px;width:78.93px;height:18.00px;display:flex;align-items:center;justify-content:center;text-align:center;font-size:11.6px;line-height:14.8px;overflow:hidden;"><span>PMS:</span></div>
<div style="left:471.33px;top:179.30px;width:78.93px;height:18.00px;display:flex;align-items:center;justify-content:center;text-align:center;font-size:11.6px;line-height:14.8px;overflow:hidden;"><span>382.01.01.01</span></div>
<div style="left:551.26px;top:179.30px;width:78.93px;height:18.00px;display:flex;align-items:center;justify-content:center;text-align:center;font-size:11.6px;line-height:14.8px;overflow:hidden;"><span>Standard:</span></div>
<div style="left:631.19px;top:179.30px;width:78.93px;height:18.00px;display:flex;align-items:center;justify-content:center;text-align:center;font-size:11.6px;line-height:14.8px;overflow:hidden;line-height:16.5px"><span>Hydraulic<br>motor 1</span></div>
<div style="left:791.05px;top:179.30px;width:78.93px;height:18.00px;display:flex;align-items:center;justify-content:center;text-align:center;font-size:11.6px;line-height:14.8px;overflow:hidden;"><span>6307</span></div>
<div style="left:950.91px;top:179.30px;width:78.93px;height:18.00px;display:flex;align-items:center;justify-content:center;text-align:center;font-size:11.6px;line-height:14.8px;overflow:hidden;"><span>H1</span></div>
<div style="left:1030.84px;top:179.30px;width:78.93px;height:18.00px;background:#ffff9d;display:flex;align-items:center;justify-content:center;text-align:center;font-size:11.6px;line-height:14.8px;overflow:hidden;"><span>3.065</span></div>
<div style="left:1110.77px;top:179.30px;width:78.93px;height:18.00px;background:#35dcfc;display:flex;align-items:center;justify-content:center;text-align:center;font-size:11.6px;line-height:14.8px;overflow:hidden;"><span>38.616</span></div>
<div style="left:1190.70px;top:179.30px;width:78.93px;height:75.00px;background:#35dcfc;display:flex;align-items:center;justify-content:center;text-align:center;font-size:11.6px;line-height:14.8px;overflow:hidden;"><span>'RPM': '3500',<br>'Remarks':<br>'No counter',<br>'Work<br>Parameters':</span></div>
<div style="left:1270.63px;top:179.30px;width:78.93px;height:75.00px;background:#35dcfc;display:flex;align-items:center;justify-content:center;text-align:center;font-size:11.6px;line-height:14.8px;overflow:hidden;"><span>-</span></div>
<div style="left:1350.56px;top:179.30px;width:78.93px;height:75.00px;background:#35dcfc;display:flex;align-items:center;justify-content:center;text-align:center;font-size:11.6px;line-height:14.8px;overflow:hidden;"><span>-</span></div>
<div style="left:1430.49px;top:179.30px;width:78.93px;height:18.00px;background:#ff9d9d;display:flex;align-items:center;justify-content:center;text-align:center;font-size:11.6px;line-height:14.8px;overflow:hidden;"><span>5.718</span></div>
<div style="left:1510.42px;top:179.30px;width:78.93px;height:18.00px;display:flex;align-items:center;justify-content:center;text-align:center;font-size:11.6px;line-height:14.8px;overflow:hidden;"><span>140.376</span></div>
<div style="left:391.40px;top:198.30px;width:78.93px;height:18.00px;display:flex;align-items:center;justify-content:center;text-align:center;font-size:11.6px;line-height:14.8px;overflow:hidden;"><span>Type:</span></div>
<div style="left:471.33px;top:198.30px;width:78.93px;height:18.00px;display:flex;align-items:center;justify-content:center;text-align:center;font-size:11.6px;line-height:14.8px;overflow:hidden;line-height:16.5px"><span>Hydraulic<br>motor</span></div>
<div style="left:551.26px;top:198.30px;width:78.93px;height:18.00px;display:flex;align-items:center;justify-content:center;text-align:center;font-size:11.6px;line-height:14.8px;overflow:hidden;"><span>Mounting:</span></div>
<div style="left:631.19px;top:198.30px;width:78.93px;height:18.00px;display:flex;align-items:center;justify-content:center;text-align:center;font-size:11.6px;line-height:14.8px;overflow:hidden;"><span>-</span></div>
<div style="left:791.05px;top:198.30px;width:78.93px;height:18.00px;display:flex;align-items:center;justify-content:center;text-align:center;font-size:11.6px;line-height:14.8px;overflow:hidden;"><span>6307</span></div>
<div style="left:950.91px;top:198.30px;width:78.93px;height:18.00px;display:flex;align-items:center;justify-content:center;text-align:center;font-size:11.6px;line-height:14.8px;overflow:hidden;"><span>HH1</span></div>
<div style="left:1030.84px;top:198.30px;width:78.93px;height:18.00px;background:#9dffb4;display:flex;align-items:center;justify-content:center;text-align:center;font-size:11.6px;line-height:14.8px;overflow:hidden;"><span>2.558</span></div>
<div style="left:1110.77px;top:198.30px;width:78.93px;height:18.00px;background:#35dcfc;display:flex;align-items:center;justify-content:center;text-align:center;font-size:11.6px;line-height:14.8px;overflow:hidden;"><span>43.836</span></div>
<div style="left:1430.49px;top:198.30px;width:78.93px;height:18.00px;background:#ff9d9d;display:flex;align-items:center;justify-content:center;text-align:center;font-size:11.6px;line-height:14.8px;overflow:hidden;"><span>5.104</span></div>
<div style="left:1510.42px;top:198.30px;width:78.93px;height:18.00px;display:flex;align-items:center;justify-content:center;text-align:center;font-size:11.6px;line-height:14.8px;overflow:hidden;"><span>130.412</span></div>
<div style="left:391.40px;top:217.30px;width:78.93px;height:18.00px;display:flex;align-items:center;justify-content:center;text-align:center;font-size:11.6px;line-height:14.8px;overflow:hidden;"><span>Class</span></div>
<div style="left:471.33px;top:217.30px;width:78.93px;height:18.00px;display:flex;align-items:center;justify-content:center;text-align:center;font-size:11.6px;line-height:14.8px;overflow:hidden;"><span>limit</span></div>
<div style="left:551.26px;top:217.30px;width:78.93px;height:18.00px;background:#35dcfc;display:flex;align-items:center;justify-content:center;text-align:center;font-size:11.6px;line-height:14.8px;overflow:hidden;"><span>Info:</span></div>
<div style="left:791.05px;top:217.30px;width:78.93px;height:18.00px;display:flex;align-items:center;justify-content:center;text-align:center;font-size:11.6px;line-height:14.8px;overflow:hidden;"><span>taper bearing</span></div>
<div style="left:950.91px;top:217.30px;width:78.93px;height:18.00px;display:flex;align-items:center;justify-content:center;text-align:center;font-size:11.6px;line-height:14.8px;overflow:hidden;"><span>H2</span></div>
<div style="left:1030.84px;top:217.30px;width:78.93px;height:18.00px;background:#ffff9d;display:flex;align-items:center;justify-content:center;text-align:center;font-size:11.6px;line-height:14.8px;overflow:hidden;"><span>3.716</span></div>
<div style="left:1110.77px;top:217.30px;width:78.93px;height:18.00px;background:#35dcfc;display:flex;align-items:center;justify-content:center;text-align:center;font-size:11.6px;line-height:14.8px;overflow:hidden;"><span>41.755</span></div>
<div style="left:1430.49px;top:217.30px;width:78.93px;height:18.00px;background:#ff9d9d;display:flex;align-items:center;justify-content:center;text-align:center;font-size:11.6px;line-height:14.8px;overflow:hidden;"><span>6.349</span></div>
<div style="left:1510.42px;top:217.30px;width:78.93px;height:18.00px;display:flex;align-items:center;justify-content:center;text-align:center;font-size:11.6px;line-height:14.8px;overflow:hidden;"><span>88.255</span></div>
<div style="left:391.40px;top:236.30px;width:78.93px;height:18.00px;background:#9dffb4;display:flex;align-items:center;justify-content:center;text-align:center;font-size:11.6px;line-height:14.8px;overflow:hidden;"><span>Cl. A</span></div>
<div style="left:471.33px;top:236.30px;width:78.93px;height:18.00px;background:#9dffb4;display:flex;align-items:center;justify-content:center;text-align:center;font-size:11.6px;line-height:14.8px;overflow:hidden;"><span>0.0</span></div>
<div style="left:551.26px;top:236.30px;width:238.79px;height:75.00px;background:#35dcfc;text-align:center;font-size:11.6px;line-height:14.8px;overflow:hidden;padding-top:1.5px;box-sizing:border-box">Bearing type: Tapered roller bearing (NDE)<br>and Ball bearing 6307 (DE)<br>No running hours record.</div>
<div style="left:791.05px;top:236.30px;width:78.93px;height:18.00px;display:flex;align-items:center;justify-content:center;text-align:center;font-size:11.6px;line-height:14.8px;overflow:hidden;"><span>taper bearing</span></div>
<div style="left:950.91px;top:236.30px;width:78.93px;height:18.00px;display:flex;align-items:center;justify-content:center;text-align:center;font-size:11.6px;line-height:14.8px;overflow:hidden;"><span>HH2</span></div>
<div style="left:1030.84px;top:236.30px;width:78.93px;height:18.00px;background:#9dffb4;display:flex;align-items:center;justify-content:center;text-align:center;font-size:11.6px;line-height:14.8px;overflow:hidden;"><span>2.166</span></div>
<div style="left:1110.77px;top:236.30px;width:78.93px;height:18.00px;background:#35dcfc;display:flex;align-items:center;justify-content:center;text-align:center;font-size:11.6px;line-height:14.8px;overflow:hidden;"><span>38.543</span></div>
<div style="left:1430.49px;top:236.30px;width:78.93px;height:18.00px;background:#ffff9d;display:flex;align-items:center;justify-content:center;text-align:center;font-size:11.6px;line-height:14.8px;overflow:hidden;"><span>4.045</span></div>
<div style="left:1510.42px;top:236.30px;width:78.93px;height:18.00px;display:flex;align-items:center;justify-content:center;text-align:center;font-size:11.6px;line-height:14.8px;overflow:hidden;"><span>76.101</span></div>
<div style="left:391.40px;top:255.30px;width:78.93px;height:18.00px;background:#9dffb4;display:flex;align-items:center;justify-content:center;text-align:center;font-size:11.6px;line-height:14.8px;overflow:hidden;"><span>Cl. B</span></div>
<div style="left:471.33px;top:255.30px;width:78.93px;height:18.00px;background:#9dffb4;display:flex;align-items:center;justify-content:center;text-align:center;font-size:11.6px;line-height:14.8px;overflow:hidden;"><span>1.1</span></div>
<div style="left:391.40px;top:274.30px;width:78.93px;height:18.00px;background:#ffff9d;display:flex;align-items:center;justify-content:center;text-align:center;font-size:11.6px;line-height:14.8px;overflow:hidden;"><span>Cl. C</span></div>
<div style="left:471.33px;top:274.30px;width:78.93px;height:18.00px;background:#ffff9d;display:flex;align-items:center;justify-content:center;text-align:center;font-size:11.6px;line-height:14.8px;overflow:hidden;"><span>2.8</span></div>
<div style="left:391.40px;top:293.30px;width:78.93px;height:18.00px;background:#ff9d9d;display:flex;align-items:center;justify-content:center;text-align:center;font-size:11.6px;line-height:14.8px;overflow:hidden;"><span>Cl. D</span></div>
<div style="left:471.33px;top:293.30px;width:78.93px;height:18.00px;background:#ff9d9d;display:flex;align-items:center;justify-content:center;text-align:center;font-size:11.6px;line-height:14.8px;overflow:hidden;"><span>4.5</span></div>
<div style="left:309.4px;top:679px;width:1272.6px;height:16px;background:#f0f0f0"></div>
<div style="left:326px;top:680px;width:653px;height:14px;background:#cdcdcd"></div>
<svg style="left:313px;top:682px" width="10" height="10" viewBox="0 0 10 10"><path d="M6.5 1.5 L3 5 L6.5 8.5" stroke="#606060" stroke-width="1.6" fill="none"/></svg>
<svg style="left:1570px;top:682px" width="10" height="10" viewBox="0 0 10 10"><path d="M3.5 1.5 L7 5 L3.5 8.5" stroke="#606060" stroke-width="1.6" fill="none"/></svg>
<div style="left:1595px;top:55px;width:320px;height:649px;background:#e1e6f8"></div>
<div style="left:1595px;top:75px;width:1px;height:629px;background:#a0a0a0"></div>
<div style="left:1595px;top:702px;width:320px;height:2px;background:#a0a0a0"></div>
<div style="left:1595px;top:55px;width:320px;height:20px;background:linear-gradient(#b9b9b9,#d3d3d3);border-top:1px solid #a0a0a0;box-sizing:border-box"></div>
<div style="left:1595px;top:59.60px;height:10.8px;line-height:10.8px;font-size:10.8px;white-space:pre;color:#000"> Remarks</div>
<svg style="left:1900px;top:60px" width="10" height="10" viewBox="0 0 10 10"><path d="M1 1 L9 9 M9 1 L1 9" stroke="#000" stroke-width="1.7"/></svg>
<div style="left:1596.3px;top:76.75px;height:11.7px;line-height:11.7px;font-size:11.7px;white-space:pre;">3549U3-2021 Hydraulic Motor Tank Cleaning Pump No.1</div>
<div style="left:1602.6px;top:98.00px;height:11.6px;line-height:11.6px;font-size:11.6px;white-space:pre;font-weight:bold">Measurement card:</div>
<div style="left:1602.4px;top:112.3px;width:305px;height:54px;background:#f0f0f0;border:1px solid #7a7a7a;box-sizing:border-box"></div>
<div style="left:1889.4px;top:113.3px;width:17px;height:52px;background:#f0f0f0"></div>
<svg style="left:1893.4px;top:119.3px" width="10" height="6" viewBox="0 0 10 6"><path d="M1 5 L5 1 L9 5" stroke="#b0b0b0" stroke-width="1.2" fill="none"/></svg>
<svg style="left:1893.4px;top:154.3px" width="10" height="6" viewBox="0 0 10 6"><path d="M1 1 L5 5 L9 1" stroke="#b0b0b0" stroke-width="1.2" fill="none"/></svg>
<div style="left:1608px;top:117.10px;height:11.8px;line-height:11.8px;font-size:11.8px;white-space:pre;">{'RHs': '', 'RPM': '3500', 'Remarks': 'No counter',</div>
<div style="left:1608px;top:131.70px;height:11.8px;line-height:11.8px;font-size:11.8px;white-space:pre;">'Work Parameters': ''}</div>
<div style="left:1605.2px;top:177.00px;height:11.6px;line-height:11.6px;font-size:11.6px;white-space:pre;font-weight:bold">Remark:</div>
<div style="left:1605.7px;top:192px;width:248.3px;height:17.6px;background:#e1e1e1;border:1px solid #adadad;box-sizing:border-box"></div>
<div style="left:1605.7px;top:195.20px;height:11.2px;line-height:11.2px;font-size:11.2px;white-space:pre;width:248.29999999999995px;text-align:center;">Remarks Wizzard</div>
<div style="left:1605.7px;top:211px;width:248.3px;height:79.5px;background:#ffffb0;border:1px solid #7a7a7a;box-sizing:border-box"></div>
<div style="left:1836.0px;top:212px;width:17px;height:77.5px;background:#f0f0f0"></div>
<svg style="left:1840.0px;top:218px" width="10" height="6" viewBox="0 0 10 6"><path d="M1 5 L5 1 L9 5" stroke="#b0b0b0" stroke-width="1.2" fill="none"/></svg>
<svg style="left:1840.0px;top:278.5px" width="10" height="6" viewBox="0 0 10 6"><path d="M1 1 L5 5 L9 1" stroke="#b0b0b0" stroke-width="1.2" fill="none"/></svg>
<div style="left:1858.8px;top:188.6px;width:48.200000000000045px;height:103.1px;background:#dcdcdc;border:1px solid #b8b8b8;box-sizing:border-box"></div>
<div style="left:1863.3px;top:192.7px;width:39.600000000000136px;height:95.0px;background:#ffb6b6"></div>
<div style="left:1858.8px;top:234.40px;height:11.6px;line-height:11.6px;font-size:11.6px;white-space:pre;width:48.200000000000045px;text-align:center;">Save</div>
<div style="left:1605.7px;top:297.60px;height:12px;line-height:12px;font-size:12px;white-space:pre;">Reminder condition:</div>
<div style="left:1605.3px;top:312.4px;width:249px;height:38.8px;background:#ffffff;border:1px solid #7a7a7a;box-sizing:border-box"></div>
<div style="left:1836.3px;top:313.4px;width:17px;height:36.8px;background:#f0f0f0"></div>
<svg style="left:1840.3px;top:319.4px" width="10" height="6" viewBox="0 0 10 6"><path d="M1 5 L5 1 L9 5" stroke="#b0b0b0" stroke-width="1.2" fill="none"/></svg>
<svg style="left:1840.3px;top:339.2px" width="10" height="6" viewBox="0 0 10 6"><path d="M1 1 L5 5 L9 1" stroke="#b0b0b0" stroke-width="1.2" fill="none"/></svg>
<div style="left:1859.2px;top:297.3px;width:47.299999999999955px;height:103.59999999999997px;background:#dcdcdc;border:1px solid #b8b8b8;box-sizing:border-box"></div>
<div style="left:1863.3px;top:301px;width:39.600000000000136px;height:96.60000000000002px;background:#98fb98"></div>
<div style="left:1859.2px;top:343.50px;height:11.6px;line-height:11.6px;font-size:11.6px;white-space:pre;width:47.299999999999955px;text-align:center;">Accept</div>
<div style="left:1605.3px;top:358.5px;width:12.2px;height:11.8px;background:#fff;border:1px solid #333;box-sizing:border-box"></div>
<div style="left:1620.8px;top:358.80px;height:11.6px;line-height:11.6px;font-size:11.6px;white-space:pre;">Send</div>
<div style="left:1658.7px;top:358.5px;width:12.2px;height:11.8px;background:#fff;border:1px solid #333;box-sizing:border-box"></div>
<div style="left:1674.2px;top:358.80px;height:11.6px;line-height:11.6px;font-size:11.6px;white-space:pre;">Reminder</div>
<div style="left:1605.3px;top:376.8px;width:249px;height:22.5px;background:#fff;border:1px solid #7a7a7a;box-sizing:border-box"></div>
<div style="left:1609.8px;top:382.20px;height:11.6px;line-height:11.6px;font-size:11.6px;white-space:pre;">21.10.2021</div>
<svg style="left:1841px;top:385px" width="10" height="6" viewBox="0 0 10 6"><path d="M1 1 L5 5 L9 1" stroke="#333" stroke-width="1.2" fill="none"/></svg>
<div style="left:1602.4px;top:409.80px;height:11.6px;line-height:11.6px;font-size:11.6px;white-space:pre;font-weight:bold">Feedback:</div>
<div style="left:1602.4px;top:424.65px;height:9.5px;line-height:9.5px;font-size:9.5px;white-space:pre;">Date</div>
<div style="left:1602.4px;top:437.2px;width:305px;height:53.8px;background:#f0f0f0;border:1px solid #7a7a7a;box-sizing:border-box"></div>
<div style="left:1889.4px;top:438.2px;width:17px;height:51.8px;background:#f0f0f0"></div>
<svg style="left:1893.4px;top:444.2px" width="10" height="6" viewBox="0 0 10 6"><path d="M1 5 L5 1 L9 5" stroke="#b0b0b0" stroke-width="1.2" fill="none"/></svg>
<svg style="left:1893.4px;top:479.0px" width="10" height="6" viewBox="0 0 10 6"><path d="M1 1 L5 5 L9 1" stroke="#b0b0b0" stroke-width="1.2" fill="none"/></svg>
<div style="left:1602.4px;top:499.00px;height:11.6px;line-height:11.6px;font-size:11.6px;white-space:pre;font-weight:bold">Flags:</div>
<div style="left:1602.4px;top:513px;width:305px;height:18.3px;background:#e5e5e5;border:1px solid #b8b8b8;box-sizing:border-box"></div>
<svg style="left:1894.4px;top:519.65px" width="10" height="6" viewBox="0 0 10 6"><path d="M1 1 L5 5 L9 1" stroke="#333" stroke-width="1.2" fill="none"/></svg>
<div style="left:1603.2px;top:534.1px;width:152.20000000000005px;height:27.299999999999955px;background:#dcdcdc;border:1px solid #b8b8b8;box-sizing:border-box"></div>
<div style="left:1607px;top:538.0px;width:145px;height:20.0px;background:#ffb6b6"></div>
<div style="left:1603.2px;top:542.20px;height:11.6px;line-height:11.6px;font-size:11.6px;white-space:pre;width:152.20000000000005px;text-align:center;">Save</div>
<div style="left:1758.2px;top:534.1px;width:147.5px;height:27.299999999999955px;background:#dcdcdc;border:1px solid #b8b8b8;box-sizing:border-box"></div>
<div style="left:1761.7px;top:538.0px;width:140.29999999999995px;height:20.0px;background:#cccccc"></div>
<div style="left:1758.2px;top:542.20px;height:11.6px;line-height:11.6px;font-size:11.6px;white-space:pre;width:147.5px;text-align:center;">Accept</div>
<div style="left:1602.2px;top:563.3px;width:305.4px;height:19px;background:#e5e5e5;border:1px solid #b8b8b8;box-sizing:border-box"></div>
<svg style="left:1894.6px;top:570.3px" width="10" height="6" viewBox="0 0 10 6"><path d="M1 1 L5 5 L9 1" stroke="#333" stroke-width="1.2" fill="none"/></svg>
<div style="left:1603.2px;top:584.2px;width:152.20000000000005px;height:27.299999999999955px;background:#dcdcdc;border:1px solid #b8b8b8;box-sizing:border-box"></div>
<div style="left:1607px;top:588.1px;width:145px;height:20.0px;background:#ffb6b6"></div>
<div style="left:1603.2px;top:592.30px;height:11.6px;line-height:11.6px;font-size:11.6px;white-space:pre;width:152.20000000000005px;text-align:center;">Save</div>
<div style="left:1758.2px;top:584.2px;width:147.5px;height:27.299999999999955px;background:#dcdcdc;border:1px solid #b8b8b8;box-sizing:border-box"></div>
<div style="left:1761.7px;top:588.1px;width:140.29999999999995px;height:20.0px;background:#cccccc"></div>
<div style="left:1758.2px;top:592.30px;height:11.6px;line-height:11.6px;font-size:11.6px;white-space:pre;width:147.5px;text-align:center;">Accept</div>
<div style="left:1605.4px;top:623.20px;height:11.6px;line-height:11.6px;font-size:11.6px;white-space:pre;font-weight:bold">Comment:</div>
<div style="left:1605.4px;top:637.2px;width:249.3px;height:56.8px;background:#ffffff;border:1px solid #7a7a7a;box-sizing:border-box"></div>
<div style="left:1836.7px;top:638.2px;width:17px;height:54.8px;background:#f0f0f0"></div>
<svg style="left:1840.7px;top:644.2px" width="10" height="6" viewBox="0 0 10 6"><path d="M1 5 L5 1 L9 5" stroke="#b0b0b0" stroke-width="1.2" fill="none"/></svg>
<svg style="left:1840.7px;top:682.0px" width="10" height="6" viewBox="0 0 10 6"><path d="M1 1 L5 5 L9 1" stroke="#b0b0b0" stroke-width="1.2" fill="none"/></svg>
<div style="left:1859px;top:635.3px;width:47.700000000000045px;height:60.30000000000007px;background:#dcdcdc;border:1px solid #b8b8b8;box-sizing:border-box"></div>
<div style="left:1863.2px;top:639.4px;width:39.700000000000045px;height:52.30000000000007px;background:#ffb6b6"></div>
<div style="left:1859px;top:659.75px;height:11.6px;line-height:11.6px;font-size:11.6px;white-space:pre;width:47.700000000000045px;text-align:center;">Save</div>
<div style="left:0px;top:708px;width:1915px;height:20px;background:linear-gradient(#b9b9b9,#d3d3d3);border-top:1px solid #a0a0a0;box-sizing:border-box"></div>
<div style="left:0px;top:712.60px;height:10.8px;line-height:10.8px;font-size:10.8px;white-space:pre;color:#000">Device trend</div>
<svg style="left:1899.5px;top:713px" width="10" height="10" viewBox="0 0 10 10"><path d="M1 1 L9 9 M9 1 L1 9" stroke="#000" stroke-width="1.7"/></svg>
<div style="left:0px;top:728px;width:1915px;height:244px;background:#ffffff"></div>
<svg style="left:0;top:0" width="1915" height="972"><line x1="243.4" y1="762.4" x2="243.4" y2="972" stroke="#b0b0b0" stroke-width="1"/><line x1="373.3" y1="762.4" x2="373.3" y2="972" stroke="#b0b0b0" stroke-width="1"/><line x1="505.2" y1="762.4" x2="505.2" y2="972" stroke="#b0b0b0" stroke-width="1"/><line x1="638.5" y1="762.4" x2="638.5" y2="972" stroke="#b0b0b0" stroke-width="1"/><line x1="772" y1="762.4" x2="772" y2="972" stroke="#b0b0b0" stroke-width="1"/><line x1="905.3" y1="762.4" x2="905.3" y2="972" stroke="#b0b0b0" stroke-width="1"/><line x1="1037.6" y1="762.4" x2="1037.6" y2="972" stroke="#b0b0b0" stroke-width="1"/><line x1="1165.3" y1="762.4" x2="1165.3" y2="972" stroke="#b0b0b0" stroke-width="1"/><line x1="1297.3" y1="762.4" x2="1297.3" y2="972" stroke="#b0b0b0" stroke-width="1"/><line x1="1430.2" y1="762.4" x2="1430.2" y2="972" stroke="#b0b0b0" stroke-width="1"/><line x1="1564.6" y1="762.4" x2="1564.6" y2="972" stroke="#b0b0b0" stroke-width="1"/><line x1="1697.5" y1="762.4" x2="1697.5" y2="972" stroke="#b0b0b0" stroke-width="1"/><line x1="236.8" y1="787.3" x2="1723.4" y2="787.3" stroke="#b0b0b0" stroke-width="1"/><line x1="232" y1="787.3" x2="236.8" y2="787.3" stroke="#000" stroke-width="1"/><line x1="236.8" y1="829.25" x2="1723.4" y2="829.25" stroke="#b0b0b0" stroke-width="1"/><line x1="232" y1="829.25" x2="236.8" y2="829.25" stroke="#000" stroke-width="1"/><line x1="236.8" y1="871.1999999999999" x2="1723.4" y2="871.1999999999999" stroke="#b0b0b0" stroke-width="1"/><line x1="232" y1="871.1999999999999" x2="236.8" y2="871.1999999999999" stroke="#000" stroke-width="1"/><line x1="236.8" y1="913.15" x2="1723.4" y2="913.15" stroke="#b0b0b0" stroke-width="1"/><line x1="232" y1="913.15" x2="236.8" y2="913.15" stroke="#000" stroke-width="1"/><line x1="236.8" y1="955.0999999999999" x2="1723.4" y2="955.0999999999999" stroke="#b0b0b0" stroke-width="1"/><line x1="232" y1="955.0999999999999" x2="236.8" y2="955.0999999999999" stroke="#000" stroke-width="1"/><rect x="236.8" y="762.4" width="1486.6" height="300" fill="none" stroke="#000" stroke-width="1"/><polyline fill="none" stroke="#1f77b4" stroke-width="1.5" points="303.3,865 442,884.3 581,964.4 665.9,879.1 996.1,879.2 1072.5,936.2 1289.3,771.7 1471.2,856.6 1655.1,967.3"/><circle cx="303.3" cy="865" r="3.3" fill="#1f77b4"/><circle cx="442" cy="884.3" r="3.3" fill="#1f77b4"/><circle cx="581" cy="964.4" r="3.3" fill="#1f77b4"/><circle cx="665.9" cy="879.1" r="3.3" fill="#1f77b4"/><circle cx="996.1" cy="879.2" r="3.3" fill="#1f77b4"/><circle cx="1072.5" cy="936.2" r="3.3" fill="#1f77b4"/><circle cx="1289.3" cy="771.7" r="3.3" fill="#1f77b4"/><circle cx="1471.2" cy="856.6" r="3.3" fill="#1f77b4"/><circle cx="1655.1" cy="967.3" r="3.3" fill="#1f77b4"/></svg>
<div style="left:218px;top:781.45px;height:12.3px;line-height:12.3px;font-size:12.3px;white-space:pre;width:12px;text-align:right">8</div>
<div style="left:218px;top:823.40px;height:12.3px;line-height:12.3px;font-size:12.3px;white-space:pre;width:12px;text-align:right">7</div>
<div style="left:218px;top:865.35px;height:12.3px;line-height:12.3px;font-size:12.3px;white-space:pre;width:12px;text-align:right">6</div>
<div style="left:218px;top:907.30px;height:12.3px;line-height:12.3px;font-size:12.3px;white-space:pre;width:12px;text-align:right">5</div>
<div style="left:218px;top:949.25px;height:12.3px;line-height:12.3px;font-size:12.3px;white-space:pre;width:12px;text-align:right">4</div>
<div style="left:1915px;top:0;width:1865px;height:972px;background:#fff;overflow:hidden">
<div style="left:0px;top:0px;width:1865px;height:2px;background:#dee1e6"></div>
<div style="left:1481.6px;top:0px;width:90.8px;height:2px;background:#ffffff"></div>
<div style="left:0px;top:2px;width:1865px;height:36px;background:#ffffff"></div>
<div style="left:0px;top:38px;width:1865px;height:1px;background:#dadce0"></div>
<svg style="left:14px;top:12px" width="16" height="16" viewBox="1929 12 16 16"><path d="M1943.9 20 H1931.5 M1937.5 13.6 L1931 20 L1937.5 26.4" stroke="#5f6368" stroke-width="1.9" fill="none"/></svg>
<svg style="left:46px;top:12px" width="16" height="16" viewBox="1961 12 16 16"><path d="M1962 20 H1974.5 M1968.5 13.6 L1975 20 L1968.5 26.4" stroke="#bdc1c6" stroke-width="1.9" fill="none"/></svg>
<svg style="left:78px;top:12px" width="16" height="16" viewBox="1993 12 16 16"><path d="M2006 15.6 A6.6 6.6 0 1 0 2007.2 21" stroke="#5f6368" stroke-width="1.9" fill="none"/><path d="M2008 12.9 V18.4 H2002.5 Z" fill="#5f6368"/></svg>
<div style="left:108.29999999999995px;top:6.1px;width:1671.3px;height:27.8px;background:#f1f3f4;border-radius:14px"></div>
<svg style="left:118.5px;top:13px" width="15" height="13" viewBox="0 0 15 13"><path d="M7.5 0.3 L14.6 12.8 H0.4 Z" fill="#5f6368"/><rect x="6.7" y="4.3" width="1.7" height="3.6" fill="#f1f3f4"/><rect x="6.7" y="9.2" width="1.7" height="1.7" fill="#f1f3f4"/></svg>
<div style="left:142px;top:13.40px;height:13.6px;line-height:13.6px;font-size:13.6px;white-space:pre;color:#5f6368">Niezabezpieczona</div>
<div style="left:261px;top:13px;width:1px;height:15px;background:#9aa0a6"></div>
<div style="left:271.4000000000001px;top:13.4px;height:14px;line-height:14px;font-size:13.5px;white-space:pre;color:#202124">192.168.10.232<span style="color:#5f6368">:5001/structure</span></div>
<svg style="left:1722px;top:12.5px" width="16" height="16" viewBox="0 0 16 16"><circle cx="6.5" cy="6.5" r="5.2" stroke="#5f6368" stroke-width="1.6" fill="none"/><path d="M4 6.5 H9" stroke="#5f6368" stroke-width="1.5"/><path d="M10.3 10.3 L14.5 14.5" stroke="#5f6368" stroke-width="1.8"/></svg>
<svg style="left:1754px;top:12.5px" width="16" height="16" viewBox="0 0 24 24"><path d="M12 2.5 L14.6 9 L21.5 9.3 L16.2 13.7 L18 20.5 L12 16.7 L6 20.5 L7.8 13.7 L2.5 9.3 L9.4 9 Z" stroke="#5f6368" stroke-width="2" fill="none" stroke-linejoin="round"/></svg>
<svg style="left:1793px;top:12.5px" width="17" height="17" viewBox="0 0 24 24"><path d="M20.5 11H19V7c0-1.1-.9-2-2-2h-4V3.5C13 2.12 11.88 1 10.5 1S8 2.12 8 3.5V5H4c-1.1 0-1.99.9-1.99 2v3.8H3.5c1.49 0 2.7 1.21 2.7 2.7s-1.21 2.7-2.7 2.7H2V20c0 1.1.9 2 2 2h3.8v-1.5c0-1.49 1.21-2.7 2.7-2.7 1.49 0 2.7 1.21 2.7 2.7V22H17c1.1 0 2-.9 2-2v-4h1.5c1.38 0 2.5-1.12 2.5-2.5S21.88 11 20.5 11z" fill="#5f6368"/></svg>
<svg style="left:1825px;top:13px" width="17" height="15" viewBox="0 0 17 15"><path d="M1 2.5 H10 M1 6.5 H10 M1 10.5 H6.5" stroke="#5f6368" stroke-width="1.6"/><path d="M13.5 1 V11" stroke="#5f6368" stroke-width="1.6"/><path d="M13.5 1.5 H16.5" stroke="#5f6368" stroke-width="1.6"/><circle cx="11.3" cy="11.5" r="2.6" fill="#5f6368"/></svg>
<div style="left:1854.8000000000002px;top:8px;width:25px;height:25px;border-radius:50%;background:#f4511e"></div>
<div style="left:0px;top:39px;width:225px;height:933px;background:#3d5079"></div>
<div style="left:225px;top:39px;width:1640px;height:129px;background:#e6e9f4"></div>
<div style="left:287px;top:95.15px;height:35.6px;line-height:35.6px;font-size:35.6px;white-space:pre;color:#3d5079;transform:scaleY(1.065);transform-origin:0 17.8px">STRUCTURE</div>
<svg style="left:20px;top:55px" width="200" height="120" viewBox="1935 55 200 120">
<g stroke="#fff" fill="none" stroke-linecap="round">
<circle cx="2025" cy="117.3" r="42" stroke-width="1.7"/>
<path d="M2025 68.3 A49 49 0 1 1 1979.5 133.5" stroke-width="2.3"/>
<path d="M1987 93 A46 46 0 0 1 2020 72.5" stroke-width="1.3"/>
<path d="M2030 73.5 A44 44 0 0 1 2062 92" stroke-width="1.3"/>
<path d="M2003 78 Q1982 120 2010 158" stroke-width="1.4"/>
<path d="M2042 77 Q2070 118 2046 158" stroke-width="1.4"/>
<path d="M1986 108 Q2025 90 2064 110" stroke-width="1.4"/>
<path d="M1992 143 Q2030 124 2065 136" stroke-width="1.3"/>
<path d="M2003 86 Q2010 80 2012 88 Q2018 82 2022 90 Q2028 84 2030 92 Q2036 86 2036 96 Q2032 102 2026 100" stroke-width="1.5"/>
<path d="M1996 100 Q1998 92 2004 96 Q2006 104 2000 106" stroke-width="1.3"/>
<path d="M2002 115 Q2008 108 2012 116 Q2016 110 2020 116" stroke-width="1.3"/>
<path d="M2014 122 Q2024 110 2034 118 Q2028 128 2018 124 Q2024 134 2016 140 Q2026 146 2022 156 Q2030 150 2036 154" stroke-width="1.5"/>
<path d="M2044 120 Q2052 114 2056 124 Q2050 132 2054 140 Q2046 146 2042 138" stroke-width="1.4"/>
<path d="M1986 122 Q1994 118 1992 128 Q1986 134 1994 140" stroke-width="1.3"/>
<path d="M2052 88 Q2058 96 2054 104" stroke-width="1.3"/>
</g>
<g stroke="#fff" stroke-width="1.7"><line x1="1956.5" y1="149.7" x2="1992" y2="149.7"/><line x1="2060" y1="149.7" x2="2085.6" y2="149.7"/><line x1="1943" y1="156.5" x2="1998" y2="156.5"/></g>
<text x="1942.5" y="145" fill="#fff" font-size="15" font-family="Liberation Sans" letter-spacing="0.3">Info</text>
<text x="2055" y="165.5" fill="#fff" font-size="14.5" font-family="Liberation Sans" letter-spacing="1.2" font-style="italic">Marine</text>
</svg>
<div style="left:10px;top:178.70px;height:13px;line-height:13px;font-size:13px;white-space:pre;width:215px;text-align:center;color:#fff;font-weight:bold">www.info-marine.com</div>
<div style="left:197.7999999999999px;top:56.9px;width:44.6px;height:44.6px;box-sizing:border-box;border-radius:50%;background:#ffa500;border:1px solid #fff"></div>
<svg style="left:212.19999999999982px;top:72px" width="16" height="14" viewBox="0 0 16 14"><rect x="0" y="1.5" width="16" height="2.8" fill="#fff"/><rect x="0" y="5.9" width="16" height="2.8" fill="#fff"/><rect x="0" y="10.9" width="16" height="2.8" fill="#fff"/></svg>
<svg style="left:21px;top:236.0px" width="12" height="12" viewBox="0 0 12 12"><path d="M6 1 L11.5 6 H10 V11 H7.3 V7.8 H4.7 V11 H2 V6 H0.5 Z" fill="#ffffff"/></svg>
<div style="left:36.200000000000045px;top:236.20px;height:11.6px;line-height:11.6px;font-size:11.6px;white-space:pre;color:#ffffff">Home page</div>
<div style="left:21.799999999999955px;top:259.3px;width:181.10000000000014px;height:1px;background:#53648a"></div>
<svg style="left:21px;top:271.95px" width="13" height="12" viewBox="0 0 13 12"><rect x="0.5" y="3" width="12" height="8" rx="1" fill="#ffffff"/><path d="M4.5 3 V1.5 H8.5 V3" stroke="#ffffff" fill="none" stroke-width="1.2"/><rect x="0.5" y="6.3" width="12" height="0.8" fill="#3d5079"/></svg>
<div style="left:36.200000000000045px;top:272.15px;height:11.6px;line-height:11.6px;font-size:11.6px;white-space:pre;color:#ffffff">Workflow</div>
<svg style="left:195.80000000000018px;top:275.95px" width="8" height="5" viewBox="0 0 8 5"><path d="M0.3 0.5 H7.7 L4 4.5 Z" fill="#fff"/></svg>
<div style="left:21.799999999999955px;top:295.25px;width:181.10000000000014px;height:1px;background:#53648a"></div>
<svg style="left:21px;top:307.9px" width="12" height="13" viewBox="0 0 12 13"><ellipse cx="6" cy="2.5" rx="5.5" ry="2.2" fill="#ffffff"/><path d="M0.5 4 Q6 7.5 11.5 4 V6.2 Q6 9.7 0.5 6.2 Z" fill="#ffffff"/><path d="M0.5 7.6 Q6 11 11.5 7.6 V10 Q6 13.5 0.5 10 Z" fill="#ffffff"/></svg>
<div style="left:35px;top:308.10px;height:11.6px;line-height:11.6px;font-size:11.6px;white-space:pre;color:#ffffff">Database</div>
<svg style="left:195.80000000000018px;top:311.9px" width="8" height="5" viewBox="0 0 8 5"><path d="M0.3 0.5 H7.7 L4 4.5 Z" fill="#fff"/></svg>
<div style="left:21.799999999999955px;top:331.2px;width:181.10000000000014px;height:1px;background:#53648a"></div>
<svg style="left:30px;top:343.85px" width="15" height="13" viewBox="0 0 15 13"><path d="M3 9 V5 Q3 0.8 7.5 0.8 Q12 0.8 12 5 V9 Z" fill="#ffffff"/><rect x="0.5" y="8.5" width="14" height="4" fill="#ffffff"/><path d="M4.5 4 H10.5" stroke="#3d5079" stroke-width="0.8"/></svg>
<div style="left:47.200000000000045px;top:344.05px;height:11.6px;line-height:11.6px;font-size:11.6px;white-space:pre;color:#ffffff">CBM</div>
<svg style="left:195.80000000000018px;top:347.85px" width="8" height="5" viewBox="0 0 8 5"><path d="M0.3 0.5 H7.7 L4 4.5 Z" fill="#fff"/></svg>
<div style="left:30.5px;top:367.15000000000003px;width:172.4000000000001px;height:1px;background:#53648a"></div>
<svg style="left:30px;top:379.8px" width="13" height="13" viewBox="0 0 13 13"><g fill="#ffffff"><circle cx="6.5" cy="1.5" r="1.2"/><circle cx="10" cy="3" r="1.1"/><circle cx="11.5" cy="6.5" r="1"/><circle cx="10" cy="10" r="1"/><circle cx="6.5" cy="11.5" r="1"/><circle cx="3" cy="10" r="1"/><circle cx="1.5" cy="6.5" r="1.1"/><circle cx="3" cy="3" r="1.2"/></g></svg>
<div style="left:46px;top:380.00px;height:11.6px;line-height:11.6px;font-size:11.6px;white-space:pre;color:#ffffff">Load Measurements</div>
<svg style="left:195.80000000000018px;top:383.8px" width="8" height="5" viewBox="0 0 8 5"><path d="M0.3 0.5 H7.7 L4 4.5 Z" fill="#fff"/></svg>
<div style="left:30.5px;top:403.1px;width:172.4000000000001px;height:1px;background:#53648a"></div>
<svg style="left:30px;top:415.75px" width="9" height="12" viewBox="0 0 9 12"><path d="M4.5 1 Q8.5 6 8.2 8 A3.8 3.8 0 0 1 0.8 8 Q0.5 6 4.5 1 Z" fill="#ffffff"/></svg>
<div style="left:40.90000000000009px;top:415.95px;height:11.6px;line-height:11.6px;font-size:11.6px;white-space:pre;color:#ffffff">Oil analysis</div>
<div style="left:30.5px;top:439.05px;width:172.4000000000001px;height:1px;background:#53648a"></div>
<svg style="left:30px;top:451.70000000000005px" width="13" height="12" viewBox="0 0 13 12"><path d="M12.5 0.5 L0.5 6 L4.5 7.5 L5.5 11.5 L7.5 8.5 L10.5 10.5 Z M4.5 7.5 L12.5 0.5 L5.5 8.5" stroke="#ffffff" stroke-width="1.1" fill="none" stroke-linejoin="round"/></svg>
<div style="left:46px;top:451.90px;height:11.6px;line-height:11.6px;font-size:11.6px;white-space:pre;color:#ffffff">Remarks</div>
<div style="left:30.5px;top:475.00000000000006px;width:172.4000000000001px;height:1px;background:#53648a"></div>
<svg style="left:30px;top:487.65000000000003px" width="13" height="12" viewBox="0 0 13 12"><rect x="0.5" y="0.5" width="1.4" height="11.5" fill="#ffffff"/><path d="M2 1 Q5 0 7 1.5 Q9.5 3 12.5 1.5 V8 Q9.5 9.5 7 8 Q5 6.5 2 7.5 Z" fill="#ffffff"/></svg>
<div style="left:46px;top:487.85px;height:11.6px;line-height:11.6px;font-size:11.6px;white-space:pre;color:#ffffff">Feedbacks</div>
<svg style="left:195.80000000000018px;top:491.65000000000003px" width="8" height="5" viewBox="0 0 8 5"><path d="M0.3 0.5 H7.7 L4 4.5 Z" fill="#fff"/></svg>
<div style="left:30.5px;top:510.95000000000005px;width:172.4000000000001px;height:1px;background:#53648a"></div>
<svg style="left:30px;top:523.6px" width="12" height="12" viewBox="0 0 12 12"><g fill="#ffffff"><circle cx="6" cy="6" r="4.2"/><rect x="4.9" y="0" width="2.2" height="12"/><rect x="0" y="4.9" width="12" height="2.2"/><rect x="4.9" y="0" width="2.2" height="12" transform="rotate(45 6 6)"/><rect x="4.9" y="0" width="2.2" height="12" transform="rotate(-45 6 6)"/></g><circle cx="6" cy="6" r="1.8" fill="#3d5079"/></svg>
<div style="left:44.299999999999955px;top:523.80px;height:11.6px;line-height:11.6px;font-size:11.6px;white-space:pre;color:#ffffff">Bearing</div>
<div style="left:30.5px;top:546.9px;width:172.4000000000001px;height:1px;background:#53648a"></div>
<svg style="left:30px;top:559.55px" width="14" height="11" viewBox="0 0 14 11"><rect x="0.7" y="0.7" width="12.6" height="9.6" rx="1" stroke="#ffffff" stroke-width="1.3" fill="none"/><rect x="2.5" y="3" width="3.5" height="4.5" fill="#ffffff"/><path d="M7 3.5 H11.5 M7 5.5 H11.5 M7 7.5 H11.5" stroke="#ffffff" stroke-width="1"/></svg>
<div style="left:47.59999999999991px;top:559.75px;height:11.6px;line-height:11.6px;font-size:11.6px;white-space:pre;color:#ffffff">Measurment Card</div>
<svg style="left:195.80000000000018px;top:563.55px" width="8" height="5" viewBox="0 0 8 5"><path d="M0.3 0.5 H7.7 L4 4.5 Z" fill="#fff"/></svg>
<div style="left:30.5px;top:582.8499999999999px;width:172.4000000000001px;height:1px;background:#53648a"></div>
<svg style="left:30px;top:595.5px" width="12" height="12" viewBox="0 0 12 12"><g fill="#ffa500"><circle cx="6" cy="6" r="4.2"/><rect x="4.9" y="0" width="2.2" height="12"/><rect x="0" y="4.9" width="12" height="2.2"/><rect x="4.9" y="0" width="2.2" height="12" transform="rotate(45 6 6)"/><rect x="4.9" y="0" width="2.2" height="12" transform="rotate(-45 6 6)"/></g><circle cx="6" cy="6" r="1.8" fill="#3d5079"/></svg>
<div style="left:44.40000000000009px;top:595.70px;height:11.6px;line-height:11.6px;font-size:11.6px;white-space:pre;color:#ffa500">Structure</div>
<div style="left:30.5px;top:618.8px;width:172.4000000000001px;height:1px;background:#53648a"></div>
<svg style="left:30px;top:631.45px" width="12" height="12" viewBox="0 0 12 12"><path d="M1 11 L6 6 M6.5 5.5 A3 3 0 1 0 9.5 2.5 L8.5 3.5 L8.5 3.5" stroke="#ffffff" stroke-width="2.2" fill="none" stroke-linecap="round"/><path d="M7 1.5 A3.5 3.5 0 0 0 10.5 5 L11.5 3.5 L11 1 L8.5 0.5 Z" fill="#ffffff"/></svg>
<div style="left:45.700000000000045px;top:631.65px;height:11.6px;line-height:11.6px;font-size:11.6px;white-space:pre;color:#ffffff">Equipment</div>
<svg style="left:195.80000000000018px;top:635.45px" width="8" height="5" viewBox="0 0 8 5"><path d="M0.3 0.5 H7.7 L4 4.5 Z" fill="#fff"/></svg>
<div style="left:30.5px;top:654.75px;width:172.4000000000001px;height:1px;background:#53648a"></div>
<svg style="left:30px;top:667.4000000000001px" width="12" height="12" viewBox="0 0 12 12"><g fill="#ffffff"><circle cx="6" cy="6" r="4.2"/><rect x="4.9" y="0" width="2.2" height="12"/><rect x="0" y="4.9" width="12" height="2.2"/><rect x="4.9" y="0" width="2.2" height="12" transform="rotate(45 6 6)"/><rect x="4.9" y="0" width="2.2" height="12" transform="rotate(-45 6 6)"/></g><circle cx="6" cy="6" r="1.8" fill="#3d5079"/></svg>
<div style="left:44.40000000000009px;top:667.60px;height:11.6px;line-height:11.6px;font-size:11.6px;white-space:pre;color:#ffffff">Missing Remark Flag</div>
<div style="left:30.5px;top:690.7px;width:172.4000000000001px;height:1px;background:#53648a"></div>
<svg style="left:30px;top:703.35px" width="13" height="13" viewBox="0 0 13 13"><path d="M1.5 1.5 L11.5 11.5 M11.5 1.5 L1.5 11.5" stroke="#ffffff" stroke-width="2.4" stroke-linecap="round"/></svg>
<div style="left:45.700000000000045px;top:703.55px;height:11.6px;line-height:11.6px;font-size:11.6px;white-space:pre;color:#ffffff">Maintenance</div>
<svg style="left:195.80000000000018px;top:707.35px" width="8" height="5" viewBox="0 0 8 5"><path d="M0.3 0.5 H7.7 L4 4.5 Z" fill="#fff"/></svg>
<div style="left:30.5px;top:726.65px;width:172.4000000000001px;height:1px;background:#53648a"></div>
<svg style="left:21px;top:739.3000000000001px" width="14" height="11" viewBox="0 0 14 11"><rect x="0.7" y="0.7" width="12.6" height="9.6" rx="1" stroke="#ffffff" stroke-width="1.3" fill="none"/><rect x="2.5" y="3" width="3.5" height="4.5" fill="#ffffff"/><path d="M7 3.5 H11.5 M7 5.5 H11.5 M7 7.5 H11.5" stroke="#ffffff" stroke-width="1"/></svg>
<div style="left:38.5px;top:739.50px;height:11.6px;line-height:11.6px;font-size:11.6px;white-space:pre;color:#ffffff">Reporting</div>
<svg style="left:195.80000000000018px;top:743.3000000000001px" width="8" height="5" viewBox="0 0 8 5"><path d="M0.3 0.5 H7.7 L4 4.5 Z" fill="#fff"/></svg>
<div style="left:21.799999999999955px;top:762.6px;width:181.10000000000014px;height:1px;background:#53648a"></div>
<svg style="left:21px;top:775.25px" width="13" height="12" viewBox="0 0 13 12"><path d="M4 2 H12.5 M4 6 H12.5 M4 10 H12.5" stroke="#ffffff" stroke-width="1.8"/><path d="M1 0.5 V3.5 M1 4.5 V7.5 M1 8.5 V11.5" stroke="#ffffff" stroke-width="1.4"/></svg>
<div style="left:36.5px;top:775.45px;height:11.6px;line-height:11.6px;font-size:11.6px;white-space:pre;color:#ffffff">To Do</div>
<svg style="left:195.80000000000018px;top:779.25px" width="8" height="5" viewBox="0 0 8 5"><path d="M0.3 0.5 H7.7 L4 4.5 Z" fill="#fff"/></svg>
<div style="left:21.799999999999955px;top:798.55px;width:181.10000000000014px;height:1px;background:#53648a"></div>
<svg style="left:21px;top:811.2px" width="11" height="12" viewBox="0 0 11 12"><circle cx="5.5" cy="3.5" r="2.7" stroke="#ffffff" stroke-width="1.2" fill="none"/><path d="M0.8 11.5 V9.5 Q0.8 7 3 7 H8 Q10.2 7 10.2 9.5 V11.5 Z" stroke="#ffffff" stroke-width="1.2" fill="none"/></svg>
<div style="left:34.59999999999991px;top:811.40px;height:11.6px;line-height:11.6px;font-size:11.6px;white-space:pre;color:#ffffff">Personal</div>
<svg style="left:195.80000000000018px;top:815.2px" width="8" height="5" viewBox="0 0 8 5"><path d="M0.3 0.5 H7.7 L4 4.5 Z" fill="#fff"/></svg>
<div style="left:21.799999999999955px;top:834.5px;width:181.10000000000014px;height:1px;background:#53648a"></div>
<svg style="left:21px;top:847.1500000000001px" width="12" height="12" viewBox="0 0 12 12"><ellipse cx="6" cy="7" rx="3.5" ry="4.5" fill="#ffffff"/><path d="M1 4 L3 5.5 M11 4 L9 5.5 M0.5 7.5 H2.5 M11.5 7.5 H9.5 M1 11 L3 9.5 M11 11 L9 9.5 M4 1.5 L5 3 M8 1.5 L7 3" stroke="#ffffff" stroke-width="1"/></svg>
<div style="left:35.90000000000009px;top:847.35px;height:11.6px;line-height:11.6px;font-size:11.6px;white-space:pre;color:#ffffff">Report a bug</div>
<div style="left:21.799999999999955px;top:870.45px;width:181.10000000000014px;height:1px;background:#53648a"></div>
<svg style="left:21px;top:883.1px" width="12" height="12" viewBox="0 0 12 12"><circle cx="3.5" cy="4.5" r="2.6" stroke="#ffffff" stroke-width="1.8" fill="none"/><path d="M5.5 6 L11 11 M8.5 8.5 L10 7 M10 10 L11.5 8.5" stroke="#ffffff" stroke-width="1.8"/></svg>
<div style="left:36.5px;top:883.30px;height:11.6px;line-height:11.6px;font-size:11.6px;white-space:pre;color:#ffffff">Change password</div>
<div style="left:21.799999999999955px;top:906.4px;width:181.10000000000014px;height:1px;background:#53648a"></div>
<svg style="left:21px;top:919.0500000000001px" width="13" height="12" viewBox="0 0 13 12"><path d="M6.5 1 C10 1 12.3 3 12.3 5.3 C12.3 7.6 10 9.5 6.5 9.5 C5.8 9.5 5.2 9.4 4.6 9.3 L1.5 11 L2.3 8.3 C1.2 7.5 0.7 6.5 0.7 5.3 C0.7 3 3 1 6.5 1 Z" stroke="#ffffff" stroke-width="1.2" fill="none"/></svg>
<div style="left:36.5px;top:919.25px;height:11.6px;line-height:11.6px;font-size:11.6px;white-space:pre;color:#ffffff">Forum</div>
<div style="left:21.799999999999955px;top:942.35px;width:181.10000000000014px;height:1px;background:#53648a"></div>
<svg style="left:21px;top:955.0px" width="16" height="12" viewBox="0 0 16 12"><path d="M0.5 1.5 L4 11 L8 3.5 L12 11 L15.5 1.5" stroke="#ffffff" stroke-width="1.4" fill="none"/></svg>
<div style="left:39.09999999999991px;top:955.20px;height:11.6px;line-height:11.6px;font-size:11.6px;white-space:pre;color:#ffffff">Wiki</div>
<div style="left:286.3000000000002px;top:189.3px;width:773.5px;height:34px;border:1px solid #ced4da;border-radius:4px;box-sizing:border-box;background:#fff"></div>
<div style="left:286.3000000000002px;top:189.3px;width:193.19999999999982px;height:34px;background:#e9ecef;border:1px solid #ced4da;border-radius:4px 0 0 4px;box-sizing:border-box"></div>
<div style="left:298px;top:200.30px;height:14px;line-height:14px;font-size:14px;white-space:pre;color:#495057">Owner</div>
<div style="left:490.6999999999998px;top:199.60px;height:14px;line-height:14px;font-size:14px;white-space:pre;color:#495057">Utkilen AS</div>
<svg style="left:1040px;top:200.3px" width="8" height="12" viewBox="0 0 8 12"><path d="M4 0.5 L7.5 4.5 H0.5 Z M4 11.5 L7.5 7.5 H0.5 Z" fill="#343a40"/></svg>
<div style="left:286.3000000000002px;top:238.3px;width:773.5px;height:34px;border:1px solid #ced4da;border-radius:4px;box-sizing:border-box;background:#fff"></div>
<div style="left:286.3000000000002px;top:238.3px;width:193.19999999999982px;height:34px;background:#e9ecef;border:1px solid #ced4da;border-radius:4px 0 0 4px;box-sizing:border-box"></div>
<div style="left:298px;top:249.30px;height:14px;line-height:14px;font-size:14px;white-space:pre;color:#495057">Ship</div>
<div style="left:490.6999999999998px;top:248.60px;height:14px;line-height:14px;font-size:14px;white-space:pre;color:#495057">Fjellstraum</div>
<svg style="left:1040px;top:249.3px" width="8" height="12" viewBox="0 0 8 12"><path d="M4 0.5 L7.5 4.5 H0.5 Z M4 11.5 L7.5 7.5 H0.5 Z" fill="#343a40"/></svg>
<div style="left:286.3000000000002px;top:287.3px;width:773.5px;height:34px;border:1px solid #ced4da;border-radius:4px;box-sizing:border-box;background:#e9ecef"></div>
<div style="left:286.3000000000002px;top:287.3px;width:193.19999999999982px;height:34px;background:#e9ecef;border:1px solid #ced4da;border-radius:4px 0 0 4px;box-sizing:border-box"></div>
<div style="left:298px;top:298.30px;height:14px;line-height:14px;font-size:14px;white-space:pre;color:#495057">Ship ID:</div>
<div style="left:490.6999999999998px;top:297.60px;height:14px;line-height:14px;font-size:14px;white-space:pre;color:#495057">340</div>
<div style="left:1087.4px;top:189.2px;width:771.5999999999999px;height:74.19999999999999px;border:1px solid #dfdfdf;box-sizing:border-box;background:#fff"></div>
<div style="left:1088.4px;top:190.2px;width:769.5999999999999px;height:37.20000000000002px;background:#e9ecef;border-bottom:1px solid #dcdcdc"></div>
<div style="left:1102.3000000000002px;top:202.10px;height:14.4px;line-height:14.4px;font-size:14.4px;white-space:pre;color:#007bff">Config</div>
<div style="left:1175.1999999999998px;top:202.10px;height:14.4px;line-height:14.4px;font-size:14.4px;white-space:pre;color:#007bff">Structure</div>
<div style="left:1263.1px;top:202.10px;height:14.4px;line-height:14.4px;font-size:14.4px;white-space:pre;color:#007bff">General information</div>
<div style="left:1095px;top:238.95px;height:14.5px;line-height:14.5px;font-size:14.5px;white-space:pre;color:#212529">Additional options after selecting a category from the menu</div>
<svg style="left:1479.6px;top:239.5px" width="13" height="13" viewBox="0 0 13 13"><path d="M6.5 0.5 L12.5 6.5 L10.3 8.5 L8 6.2 V12.5 H5 V6.2 L2.7 8.5 L0.5 6.5 Z" fill="#212529"/></svg>
<div style="left:273px;top:335.3px;width:533px;height:636.7px;background:#d4dbe4;border-radius:4px 4px 0 0"></div>
<div style="left:806px;top:335.3px;width:399.5px;height:636.7px;background:#d4dbe4;border-radius:4px 4px 0 0"></div>
<div style="left:1205.5px;top:335.3px;width:659.5px;height:636.7px;background:#d4dbe4;border-radius:4px 0 0 0"></div>
<div style="left:280.3000000000002px;top:341.8px;width:518.7999999999997px;height:630.2px;background:#fff"></div>
<div style="left:813px;top:341.8px;width:386.5px;height:630.2px;background:#fff"></div>
<div style="left:1212.3000000000002px;top:341.8px;width:652.6999999999998px;height:630.2px;background:#fff"></div>
<div style="left:280.3000000000002px;top:360.40px;height:18px;line-height:18px;font-size:18px;white-space:pre;width:504.6999999999998px;text-align:center;font-weight:bold;color:#3d5079">DEVICES LIST</div>
<svg style="left:780px;top:360.7px" width="16" height="16" viewBox="0 0 15 15"><path d="M12.8 5.8 A5.8 5.8 0 0 0 2.2 5.2" stroke="#3d5079" stroke-width="2.3" fill="none"/><path d="M14.5 1 V7.5 H8 Z" fill="#3d5079"/><path d="M2.2 9.2 A5.8 5.8 0 0 0 12.8 9.8" stroke="#3d5079" stroke-width="2.3" fill="none"/><path d="M0.5 14 V7.5 H7 Z" fill="#3d5079"/></svg>
<div style="left:283.8000000000002px;top:393px;width:254.0px;height:31.600000000000023px;background:#ffa500;border-radius:3px"></div>
<div style="left:283.8000000000002px;top:401.85px;height:14.3px;line-height:14.3px;font-size:14.3px;white-space:pre;width:254.0px;text-align:center;color:#fff"><svg width="14" height="14" viewBox="0 0 14 14" style="position:static;vertical-align:-2px;margin-right:4px"><rect x="0.5" y="0.5" width="13" height="13" rx="2" fill="#fff"/><path d="M7 3 V11 M3 7 H11" stroke="#ffa500" stroke-width="2.2"/></svg>Add</div>
<div style="left:540px;top:393px;width:254px;height:31.600000000000023px;background:#ffa500;border-radius:3px"></div>
<div style="left:540px;top:401.85px;height:14.3px;line-height:14.3px;font-size:14.3px;white-space:pre;width:254px;text-align:center;color:#fff"><svg width="14" height="14" viewBox="0 0 14 14" style="position:static;vertical-align:-2px;margin-right:4px"><rect x="0.8" y="0.8" width="9" height="9" fill="none" stroke="#fff" stroke-width="1.2"/><rect x="3.8" y="3.8" width="9.4" height="9.4" fill="#ffa500" stroke="#fff" stroke-width="1.2"/></svg>Clone</div>
<div style="left:283.8000000000002px;top:427.2px;width:510.1999999999998px;height:31.600000000000023px;background:#ffa500;border-radius:3px"></div>
<div style="left:283.8000000000002px;top:436.05px;height:14.3px;line-height:14.3px;font-size:14.3px;white-space:pre;width:510.1999999999998px;text-align:center;color:#fff"><svg width="14" height="14" viewBox="0 0 14 14" style="position:static;vertical-align:-2px;margin-right:3px"><path d="M3 1 V12 M0.5 9.5 L3 12.5 L5.5 9.5" stroke="#fff" stroke-width="1.5" fill="none"/><text x="7" y="6.5" font-size="6.5" font-weight="bold" fill="#fff" font-family="Liberation Sans">A</text><text x="7" y="13.5" font-size="6.5" font-weight="bold" fill="#fff" font-family="Liberation Sans">Z</text></svg>Sort</div>
<div style="left:283.4000000000001px;top:460px;width:511.1999999999998px;height:27.7px;border:1px solid #ced4da;border-radius:3px;box-sizing:border-box;background:#fff"></div>
<div style="left:283.4000000000001px;top:468.00px;height:11.6px;line-height:11.6px;font-size:11.6px;white-space:pre;width:511.1999999999998px;text-align:center;color:#6c757d">Search</div>
<div style="left:296.5px;top:499.00px;height:15px;line-height:15px;font-size:14.2px;white-space:pre;color:#212529"><b style="letter-spacing:0.15px">Cargo Heating Pump No.1</b> <span style="font-size:13.6px;color:#495057">@48847</span></div>
<div style="left:296.5px;top:533.85px;height:15px;line-height:15px;font-size:14.2px;white-space:pre;color:#212529"><b style="letter-spacing:0.15px">El.Motor Cargo Heating Pump No.1</b> <span style="font-size:13.6px;color:#495057">@48941</span></div>
<div style="left:296.5px;top:568.70px;height:15px;line-height:15px;font-size:14.2px;white-space:pre;color:#212529"><b style="letter-spacing:0.15px">Cargo Heating Pump No.2</b> <span style="font-size:13.6px;color:#495057">@48919</span></div>
<div style="left:296.5px;top:603.55px;height:15px;line-height:15px;font-size:14.2px;white-space:pre;color:#212529"><b style="letter-spacing:0.15px">El.Motor Cargo Heating Pump No.2</b> <span style="font-size:13.6px;color:#495057">@48844</span></div>
<div style="left:296.5px;top:638.40px;height:15px;line-height:15px;font-size:14.2px;white-space:pre;color:#212529"><b style="letter-spacing:0.15px">Tank Cleaning Pump No.1 SB</b> <span style="font-size:13.6px;color:#495057">@48887</span></div>
<div style="left:285.1999999999998px;top:664.95px;width:490.5px;height:31.5px;background:#17a2b8;border-radius:3px"></div>
<div style="left:296.5px;top:673.25px;height:15px;line-height:15px;font-size:14.2px;white-space:pre;color:#212529"><b style="letter-spacing:0.15px">Hydraulic Motor Tank Cleaning Pump No.1</b> <span style="font-size:13.6px;color:#495057">@48871</span></div>
<div style="left:296.5px;top:708.10px;height:15px;line-height:15px;font-size:14.2px;white-space:pre;color:#212529"><b style="letter-spacing:0.15px">Tank Cleaning Pump No.2</b> <span style="font-size:13.6px;color:#495057">@48886</span></div>
<div style="left:296.5px;top:742.95px;height:15px;line-height:15px;font-size:14.2px;white-space:pre;color:#212529"><b style="letter-spacing:0.15px">Hydraulic Motor of Tank Cleaning Pump No.2</b> <span style="font-size:13.6px;color:#495057">@48870</span></div>
<div style="left:296.5px;top:777.80px;height:15px;line-height:15px;font-size:14.2px;white-space:pre;color:#212529"><b style="letter-spacing:0.15px">Bow Thruster</b> <span style="font-size:13.6px;color:#495057">@48888</span></div>
<div style="left:296.5px;top:812.65px;height:15px;line-height:15px;font-size:14.2px;white-space:pre;color:#212529"><b style="letter-spacing:0.15px">Hydraulic Motor Bow Thruster</b> <span style="font-size:13.6px;color:#495057">@48889</span></div>
<div style="left:296.5px;top:847.50px;height:15px;line-height:15px;font-size:14.2px;white-space:pre;color:#212529"><b style="letter-spacing:0.15px">ME Turbocharger (91000-15)</b> <span style="font-size:13.6px;color:#495057">@48898</span></div>
<div style="left:296.5px;top:882.35px;height:15px;line-height:15px;font-size:14.2px;white-space:pre;color:#212529"><b style="letter-spacing:0.15px">El.Motor ME Auxillary Blowers No.1 Upper</b> <span style="font-size:13.6px;color:#495057">@48909</span></div>
<div style="left:296.5px;top:917.20px;height:15px;line-height:15px;font-size:14.2px;white-space:pre;color:#212529"><b style="letter-spacing:0.15px">El.Motor ME Auxillary Blowers No.2 Lower</b> <span style="font-size:13.6px;color:#495057">@48914</span></div>
<div style="left:296.5px;top:952.05px;height:15px;line-height:15px;font-size:14.2px;white-space:pre;color:#212529"><b style="letter-spacing:0.15px">Reduction Gear ME</b> <span style="font-size:13.6px;color:#495057">@48845</span></div>
<div style="left:779px;top:489px;width:14px;height:483px;background:#f1f1f1"></div>
<div style="left:780px;top:505px;width:12px;height:273.6px;background:#c1c1c1"></div>
<svg style="left:782px;top:494px" width="8" height="5" viewBox="0 0 8 5"><path d="M0.5 4.5 L4 0.5 L7.5 4.5 Z" fill="#a3a3a3"/></svg>
<div style="left:813px;top:360.80px;height:18px;line-height:18px;font-size:18px;white-space:pre;width:386.5px;text-align:center;font-weight:bold;color:#3d5079">INFORMATION</div>
<div style="left:817.8000000000002px;top:393.2px;width:186.89999999999964px;height:31.400000000000034px;background:#ffa500;border-radius:3px"></div>
<div style="left:817.8000000000002px;top:401.95px;height:14.3px;line-height:14.3px;font-size:14.3px;white-space:pre;width:186.89999999999964px;text-align:center;color:#fff"><svg width="12" height="13" viewBox="0 0 12 13" style="position:static;vertical-align:-2px;margin-right:4px"><path d="M0.5 2.8 H11.5" stroke="#fff" stroke-width="1.3"/><path d="M3.8 2.5 V1 Q3.8 0.6 4.3 0.6 H7.7 Q8.2 0.6 8.2 1 V2.5" stroke="#fff" stroke-width="1.1" fill="none"/><path d="M1.8 3.3 L2.3 12.3 H9.7 L10.2 3.3" stroke="#fff" stroke-width="1.3" fill="none"/><path d="M4.3 5 V10.8 M6 5 V10.8 M7.7 5 V10.8" stroke="#fff" stroke-width="1"/></svg>clear panel</div>
<div style="left:1007px;top:393.2px;width:188.30000000000018px;height:31.400000000000034px;background:#ffa500;border-radius:3px"></div>
<div style="left:1007px;top:401.95px;height:14.3px;line-height:14.3px;font-size:14.3px;white-space:pre;width:188.30000000000018px;text-align:center;color:#fff"><svg width="14" height="14" viewBox="0 0 15 15" style="position:static;vertical-align:-2px;margin-right:4px"><path d="M12.5 5.5 A5.5 5.5 0 0 0 2.5 5" stroke="#fff" stroke-width="2.2" fill="none"/><path d="M13.8 1.2 V6.8 H8.2 Z" fill="#fff"/><path d="M2.5 9.5 A5.5 5.5 0 0 0 12.5 10" stroke="#fff" stroke-width="2.2" fill="none"/><path d="M1.2 13.8 V8.2 H6.8 Z" fill="#fff"/></svg>refresh panel</div>
<div style="left:817.8000000000002px;top:427px;width:377.5px;height:31.80000000000001px;background:#ffa500;border-radius:3px"></div>
<div style="left:817.8000000000002px;top:435.95px;height:14.3px;line-height:14.3px;font-size:14.3px;white-space:pre;width:377.5px;text-align:center;color:#fff"><svg width="17" height="14" viewBox="0 0 17 14" style="position:static;vertical-align:-2px;margin-right:4px"><g fill="#fff"><circle cx="6" cy="8" r="4"/><rect x="5" y="2.5" width="2" height="11"/><rect x="0.5" y="7" width="11" height="2"/><rect x="5" y="2.5" width="2" height="11" transform="rotate(45 6 8)"/><rect x="5" y="2.5" width="2" height="11" transform="rotate(-45 6 8)"/><circle cx="13" cy="4" r="2.6"/><rect x="12.4" y="0.5" width="1.2" height="7"/><rect x="9.5" y="3.4" width="7" height="1.2"/></g><circle cx="6" cy="8" r="1.6" fill="#ffa500"/><circle cx="13" cy="4" r="1" fill="#ffa500"/></svg>Advanced Device Configuration</div>
<div style="left:816.8000000000002px;top:467.30px;height:14px;line-height:14px;font-size:14px;white-space:pre;color:#212529">ID</div>
<div style="left:952.1999999999998px;top:463.5px;width:243.60000000000036px;height:26.19999999999999px;border:1px solid #ced4da;border-radius:3px;box-sizing:border-box;background:#e9ecef"></div>
<div style="left:964.4000000000001px;top:469.80px;height:14.2px;line-height:14.2px;font-size:14.2px;white-space:pre;color:#495057;overflow:hidden;width:221px">48871</div>
<div style="left:816.8000000000002px;top:501.50px;height:14px;line-height:14px;font-size:14px;white-space:pre;color:#212529">Name</div>
<div style="left:952.1999999999998px;top:497.2px;width:243.60000000000036px;height:26.19999999999999px;border:1px solid #ced4da;border-radius:3px;box-sizing:border-box;background:#fff"></div>
<div style="left:964.4000000000001px;top:503.50px;height:14.2px;line-height:14.2px;font-size:14.2px;white-space:pre;color:#495057;overflow:hidden;width:221px">Hydraulic Motor Tank Cleaning Pump No.1</div>
<div style="left:816.8000000000002px;top:536.00px;height:14px;line-height:14px;font-size:14px;white-space:pre;color:#212529">Crosstable name</div>
<div style="left:952.1999999999998px;top:532.3px;width:243.60000000000036px;height:26.200000000000045px;border:1px solid #ced4da;border-radius:3px;box-sizing:border-box;background:#fff"></div>
<div style="left:964.4000000000001px;top:538.60px;height:14.2px;line-height:14.2px;font-size:14.2px;white-space:pre;color:#495057;overflow:hidden;width:221px">TkClean 1 pp m</div>
<div style="left:816.8000000000002px;top:570.30px;height:14px;line-height:14px;font-size:14px;white-space:pre;color:#212529">Model</div>
<div style="left:952.1999999999998px;top:566.5px;width:243.60000000000036px;height:53.0px;border:1px solid #17a2b8;border-radius:3px;box-sizing:border-box;background:#fff"></div>
<div style="left:952.1999999999998px;top:576.45px;height:13.1px;line-height:13.1px;font-size:13.1px;white-space:pre;width:243.60000000000036px;text-align:center;color:#17a2b8">FRANK MOHN SERVICES</div>
<div style="left:952.1999999999998px;top:597.45px;height:13.1px;line-height:13.1px;font-size:13.1px;white-space:pre;width:243.60000000000036px;text-align:center;color:#17a2b8">A2FM 32</div>
<div style="left:816.8000000000002px;top:631.60px;height:14px;line-height:14px;font-size:14px;white-space:pre;color:#212529">Type</div>
<div style="left:952.1999999999998px;top:627.4px;width:243.60000000000036px;height:26.600000000000023px;border:1px solid #ced4da;border-radius:3px;box-sizing:border-box;background:#e9ecef"></div>
<div style="left:964.4000000000001px;top:633.90px;height:14.2px;line-height:14.2px;font-size:14.2px;white-space:pre;color:#495057;overflow:hidden;width:221px">Hydraulic motor</div>
<div style="left:816.8000000000002px;top:665.60px;height:14px;line-height:14px;font-size:14px;white-space:pre;color:#212529">kW</div>
<div style="left:952.1999999999998px;top:661.5px;width:243.60000000000036px;height:26.0px;border:1px solid #ced4da;border-radius:3px;box-sizing:border-box;background:#fff"></div>
<div style="left:964.4000000000001px;top:667.70px;height:14.2px;line-height:14.2px;font-size:14.2px;white-space:pre;color:#495057;overflow:hidden;width:221px">0.0</div>
<div style="left:816.8000000000002px;top:699.00px;height:14px;line-height:14px;font-size:14px;white-space:pre;color:#212529">rpm</div>
<div style="left:952.1999999999998px;top:696px;width:243.60000000000036px;height:25px;border:1px solid #ced4da;border-radius:3px;box-sizing:border-box;background:#fff"></div>
<div style="left:964.4000000000001px;top:701.70px;height:14.2px;line-height:14.2px;font-size:14.2px;white-space:pre;color:#495057;overflow:hidden;width:221px">3500</div>
<div style="left:816.8000000000002px;top:734.20px;height:14px;line-height:14px;font-size:14px;white-space:pre;color:#212529">PMS</div>
<div style="left:952.1999999999998px;top:730px;width:243.60000000000036px;height:26px;border:1px solid #ced4da;border-radius:3px;box-sizing:border-box;background:#fff"></div>
<div style="left:964.4000000000001px;top:736.20px;height:14.2px;line-height:14.2px;font-size:14.2px;white-space:pre;color:#495057;overflow:hidden;width:221px">382.01.01.01</div>
<div style="left:816.8000000000002px;top:768.20px;height:14px;line-height:14px;font-size:14px;white-space:pre;color:#212529">Info</div>
<div style="left:952.5px;top:764px;width:243.5px;height:147.29999999999995px;border:1px solid #767676;border-radius:2px;box-sizing:border-box;background:#fff"></div>
<div style="left:955px;top:770.80px;height:14.2px;line-height:14.2px;font-size:14.2px;white-space:pre;color:#212529">Pump room</div>
<div style="left:955px;top:791.90px;height:14.2px;line-height:14.2px;font-size:14.2px;white-space:pre;color:#212529">Bearing type: Tapered roller</div>
<div style="left:955px;top:813.00px;height:14.2px;line-height:14.2px;font-size:14.2px;white-space:pre;color:#212529">bearing (NDE) and Ball bearing</div>
<div style="left:955px;top:834.10px;height:14.2px;line-height:14.2px;font-size:14.2px;white-space:pre;color:#212529">6307 (DE)</div>
<div style="left:955px;top:855.20px;height:14.2px;line-height:14.2px;font-size:14.2px;white-space:pre;color:#212529">No running hours record.</div>
<div style="left:1178.1px;top:765px;width:16.9px;height:129.3px;background:#f1f1f1"></div>
<div style="left:1178.1px;top:894.3px;width:16.9px;height:16px;background:#e6e6e6"></div>
<div style="left:1180px;top:781.8px;width:13px;height:81px;background:#c1c1c1"></div>
<svg style="left:1182.5px;top:771.5px" width="8" height="5" viewBox="0 0 8 5"><path d="M0.3 4.7 L4 0.3 L7.7 4.7 Z" fill="#a3a3a3"/></svg>
<svg style="left:1182.5px;top:883.5px" width="8" height="5" viewBox="0 0 8 5"><path d="M0.3 0.3 L4 4.7 L7.7 0.3 Z" fill="#505050"/></svg>
<svg style="left:1184px;top:898px" width="10" height="10" viewBox="0 0 10 10"><path d="M9.5 2.5 L2.5 9.5 M9.5 6 L6 9.5" stroke="#777" stroke-width="0.9"/></svg>
<div style="left:816.9000000000001px;top:927.70px;height:14px;line-height:14px;font-size:14px;white-space:pre;color:#212529">Standard</div>
<div style="left:816.9000000000001px;top:945.4px;width:379.0999999999999px;height:40px;border:1px solid #ced4da;border-radius:3px;box-sizing:border-box;background:#fff"></div>
<div style="left:822.1999999999998px;top:952.30px;height:14.4px;line-height:14.4px;font-size:14.4px;white-space:pre;color:#495057">Hydraulic motor 1</div>
<svg style="left:1175px;top:954px" width="8" height="11" viewBox="0 0 8 11"><path d="M4 0.5 L7.5 4 H0.5 Z M4 10.5 L7.5 7 H0.5 Z" fill="#343a40"/></svg>
<div style="left:1212.3000000000002px;top:360.80px;height:18px;line-height:18px;font-size:18px;white-space:pre;width:652.6999999999998px;text-align:center;font-weight:bold;color:#3d5079">POINTS</div>
<div style="left:1222.1999999999998px;top:393.2px;width:316.4000000000001px;height:31.400000000000034px;background:#ffa500;border-radius:3px"></div>
<div style="left:1222.1999999999998px;top:401.95px;height:14.3px;line-height:14.3px;font-size:14.3px;white-space:pre;width:316.4000000000001px;text-align:center;color:#fff"><svg width="12" height="13" viewBox="0 0 12 13" style="position:static;vertical-align:-2px;margin-right:4px"><path d="M0.5 2.8 H11.5" stroke="#fff" stroke-width="1.3"/><path d="M3.8 2.5 V1 Q3.8 0.6 4.3 0.6 H7.7 Q8.2 0.6 8.2 1 V2.5" stroke="#fff" stroke-width="1.1" fill="none"/><path d="M1.8 3.3 L2.3 12.3 H9.7 L10.2 3.3" stroke="#fff" stroke-width="1.3" fill="none"/><path d="M4.3 5 V10.8 M6 5 V10.8 M7.7 5 V10.8" stroke="#fff" stroke-width="1"/></svg>clear panel</div>
<div style="left:1541px;top:393.2px;width:317px;height:31.400000000000034px;background:#ffa500;border-radius:3px"></div>
<div style="left:1541px;top:401.95px;height:14.3px;line-height:14.3px;font-size:14.3px;white-space:pre;width:317px;text-align:center;color:#fff"><svg width="14" height="14" viewBox="0 0 15 15" style="position:static;vertical-align:-2px;margin-right:4px"><path d="M12.5 5.5 A5.5 5.5 0 0 0 2.5 5" stroke="#fff" stroke-width="2.2" fill="none"/><path d="M13.8 1.2 V6.8 H8.2 Z" fill="#fff"/><path d="M2.5 9.5 A5.5 5.5 0 0 0 12.5 10" stroke="#fff" stroke-width="2.2" fill="none"/><path d="M1.2 13.8 V8.2 H6.8 Z" fill="#fff"/></svg>refresh</div>
<div style="left:1222.1999999999998px;top:427px;width:316.4000000000001px;height:31.80000000000001px;background:#ffa500;border-radius:3px"></div>
<div style="left:1222.1999999999998px;top:435.95px;height:14.3px;line-height:14.3px;font-size:14.3px;white-space:pre;width:316.4000000000001px;text-align:center;color:#fff"><svg width="9" height="13" viewBox="0 0 9 13" style="position:static;vertical-align:-2px;margin-right:4px"><path d="M4.5 0.5 L8.5 5 H0.5 Z M4.5 12.5 L8.5 8 H0.5 Z" fill="#fff"/></svg>Change points sort</div>
<div style="left:1540px;top:437.7px;width:10.8px;height:10.8px;border:1px solid #555;border-radius:2px;box-sizing:border-box;background:#fff"></div>
<div style="left:1557.8000000000002px;top:437.05px;height:14.3px;line-height:14.3px;font-size:14.3px;white-space:pre;color:#212529">Change of bearings in the block</div>
<div style="left:1216px;top:468.5px;width:649px;height:1px;background:#dee2e6"></div>
<div style="left:1228.1999999999998px;top:488.20px;height:14.2px;line-height:14.2px;font-size:14.2px;white-space:pre;font-weight:bold;color:#212529">Sort</div>
<div style="left:1294.6999999999998px;top:488.20px;height:14.2px;line-height:14.2px;font-size:14.2px;white-space:pre;font-weight:bold;color:#212529">Point</div>
<div style="left:1424.4px;top:488.20px;height:14.2px;line-height:14.2px;font-size:14.2px;white-space:pre;font-weight:bold;color:#212529">Bearing</div>
<div style="left:1535.8000000000002px;top:488.20px;height:14.2px;line-height:14.2px;font-size:14.2px;white-space:pre;font-weight:bold;color:#212529">Seal</div>
<div style="left:1634.1px;top:488.20px;height:14.2px;line-height:14.2px;font-size:14.2px;white-space:pre;font-weight:bold;color:#212529">Additional</div>
<div style="left:1751.1999999999998px;top:488.20px;height:14.2px;line-height:14.2px;font-size:14.2px;white-space:pre;font-weight:bold;color:#212529">Visible</div>
<svg style="left:1830.8000000000002px;top:483px" width="19" height="19" viewBox="0 0 19 19"><rect x="0" y="0" width="19" height="19" rx="3" fill="#008000"/><path d="M9.5 4 V15 M4 9.5 H15" stroke="#fff" stroke-width="3.2"/></svg>
<div style="left:1216px;top:516.3px;width:649px;height:2px;background:#dee2e6"></div>
<div style="left:1228.1999999999998px;top:530.0px;width:44.5px;height:26.200000000000045px;border:1px solid #ced4da;border-radius:3px;box-sizing:border-box;background:#e9ecef"></div>
<div style="left:1237px;top:537.00px;height:12.8px;line-height:12.8px;font-size:12.8px;white-space:pre;color:#495057">1</div>
<div style="left:1295.1999999999998px;top:530.0px;width:107.20000000000027px;height:26.200000000000045px;border:1px solid #ced4da;border-radius:3px;box-sizing:border-box;background:#e9ecef"></div>
<div style="left:1304.5px;top:537.00px;height:12.8px;line-height:12.8px;font-size:12.8px;white-space:pre;color:#495057">H1</div>
<div style="left:1424.4px;top:530.0px;width:89.0px;height:26.200000000000045px;border:1px solid #ced4da;border-radius:3px;box-sizing:border-box;background:#fff"></div>
<div style="left:1434.9px;top:537.00px;height:12.8px;line-height:12.8px;font-size:12.8px;white-space:pre;color:#495057">taper bea</div>
<svg style="left:1497.4px;top:540.1px" width="10" height="7" viewBox="0 0 10 7"><path d="M1 1 L5 5 L9 1" stroke="#343a40" stroke-width="1.7" fill="none"/></svg>
<div style="left:1536.3000000000002px;top:530.0px;width:74.89999999999964px;height:26.200000000000045px;border:1px solid #ced4da;border-radius:3px;box-sizing:border-box;background:#fff"></div>
<div style="left:1546.8000000000002px;top:537.00px;height:12.8px;line-height:12.8px;font-size:12.8px;white-space:pre;color:#495057">null</div>
<svg style="left:1595.1999999999998px;top:540.1px" width="10" height="7" viewBox="0 0 10 7"><path d="M1 1 L5 5 L9 1" stroke="#343a40" stroke-width="1.7" fill="none"/></svg>
<div style="left:1634.1px;top:530.0px;width:94.09999999999991px;height:26.200000000000045px;border:1px solid #ced4da;border-radius:3px;box-sizing:border-box;background:#fff"></div>
<div style="left:1644.6px;top:537.00px;height:12.8px;line-height:12.8px;font-size:12.8px;white-space:pre;color:#495057">null</div>
<svg style="left:1712.1999999999998px;top:540.1px" width="10" height="7" viewBox="0 0 10 7"><path d="M1 1 L5 5 L9 1" stroke="#343a40" stroke-width="1.7" fill="none"/></svg>
<div style="left:1751.1999999999998px;top:530.0px;width:57.100000000000364px;height:26.200000000000045px;border:1px solid #ced4da;border-radius:3px;box-sizing:border-box;background:#fff"></div>
<div style="left:1761.6999999999998px;top:537.00px;height:12.8px;line-height:12.8px;font-size:12.8px;white-space:pre;color:#495057"><span style="display:inline-block;width:20.5px;overflow:hidden;vertical-align:top">True</span></div>
<svg style="left:1792.3000000000002px;top:540.1px" width="10" height="7" viewBox="0 0 10 7"><path d="M1 1 L5 5 L9 1" stroke="#343a40" stroke-width="1.7" fill="none"/></svg>
<div style="left:1830.5px;top:531.0px"><svg width="20" height="23" viewBox="0 0 20 23"><rect x="0.5" y="3" width="19" height="2.2" fill="#e00"/><path d="M6.5 3.5 V1 H13.5 V3.5" stroke="#e00" stroke-width="2" fill="none"/><path d="M2.5 6.5 H17.5 L16.5 22 H3.5 Z" stroke="#e00" stroke-width="2" fill="none"/><path d="M7 9 V19 M10 9 V19 M13 9 V19" stroke="#e00" stroke-width="1.7"/></svg></div>
<div style="left:1216px;top:567.4px;width:649px;height:1px;background:#dee2e6"></div>
<div style="left:1228.1999999999998px;top:580.4px;width:44.5px;height:26.200000000000045px;border:1px solid #ced4da;border-radius:3px;box-sizing:border-box;background:#e9ecef"></div>
<div style="left:1237px;top:587.40px;height:12.8px;line-height:12.8px;font-size:12.8px;white-space:pre;color:#495057">2</div>
<div style="left:1295.1999999999998px;top:580.4px;width:107.20000000000027px;height:26.200000000000045px;border:1px solid #ced4da;border-radius:3px;box-sizing:border-box;background:#e9ecef"></div>
<div style="left:1304.5px;top:587.40px;height:12.8px;line-height:12.8px;font-size:12.8px;white-space:pre;color:#495057">HH1</div>
<div style="left:1424.4px;top:580.4px;width:89.0px;height:26.200000000000045px;border:1px solid #ced4da;border-radius:3px;box-sizing:border-box;background:#fff"></div>
<div style="left:1434.9px;top:587.40px;height:12.8px;line-height:12.8px;font-size:12.8px;white-space:pre;color:#495057">taper bea</div>
<svg style="left:1497.4px;top:590.5px" width="10" height="7" viewBox="0 0 10 7"><path d="M1 1 L5 5 L9 1" stroke="#343a40" stroke-width="1.7" fill="none"/></svg>
<div style="left:1536.3000000000002px;top:580.4px;width:74.89999999999964px;height:26.200000000000045px;border:1px solid #ced4da;border-radius:3px;box-sizing:border-box;background:#fff"></div>
<div style="left:1546.8000000000002px;top:587.40px;height:12.8px;line-height:12.8px;font-size:12.8px;white-space:pre;color:#495057">null</div>
<svg style="left:1595.1999999999998px;top:590.5px" width="10" height="7" viewBox="0 0 10 7"><path d="M1 1 L5 5 L9 1" stroke="#343a40" stroke-width="1.7" fill="none"/></svg>
<div style="left:1634.1px;top:580.4px;width:94.09999999999991px;height:26.200000000000045px;border:1px solid #ced4da;border-radius:3px;box-sizing:border-box;background:#fff"></div>
<div style="left:1644.6px;top:587.40px;height:12.8px;line-height:12.8px;font-size:12.8px;white-space:pre;color:#495057">null</div>
<svg style="left:1712.1999999999998px;top:590.5px" width="10" height="7" viewBox="0 0 10 7"><path d="M1 1 L5 5 L9 1" stroke="#343a40" stroke-width="1.7" fill="none"/></svg>
<div style="left:1751.1999999999998px;top:580.4px;width:57.100000000000364px;height:26.200000000000045px;border:1px solid #ced4da;border-radius:3px;box-sizing:border-box;background:#fff"></div>
<div style="left:1761.6999999999998px;top:587.40px;height:12.8px;line-height:12.8px;font-size:12.8px;white-space:pre;color:#495057"><span style="display:inline-block;width:20.5px;overflow:hidden;vertical-align:top">True</span></div>
<svg style="left:1792.3000000000002px;top:590.5px" width="10" height="7" viewBox="0 0 10 7"><path d="M1 1 L5 5 L9 1" stroke="#343a40" stroke-width="1.7" fill="none"/></svg>
<div style="left:1830.5px;top:581.4px"><svg width="20" height="23" viewBox="0 0 20 23"><rect x="0.5" y="3" width="19" height="2.2" fill="#e00"/><path d="M6.5 3.5 V1 H13.5 V3.5" stroke="#e00" stroke-width="2" fill="none"/><path d="M2.5 6.5 H17.5 L16.5 22 H3.5 Z" stroke="#e00" stroke-width="2" fill="none"/><path d="M7 9 V19 M10 9 V19 M13 9 V19" stroke="#e00" stroke-width="1.7"/></svg></div>
<div style="left:1216px;top:617.8px;width:649px;height:1px;background:#dee2e6"></div>
<div style="left:1228.1999999999998px;top:630.8px;width:44.5px;height:26.200000000000045px;border:1px solid #ced4da;border-radius:3px;box-sizing:border-box;background:#e9ecef"></div>
<div style="left:1237px;top:637.80px;height:12.8px;line-height:12.8px;font-size:12.8px;white-space:pre;color:#495057">3</div>
<div style="left:1295.1999999999998px;top:630.8px;width:107.20000000000027px;height:26.200000000000045px;border:1px solid #ced4da;border-radius:3px;box-sizing:border-box;background:#e9ecef"></div>
<div style="left:1304.5px;top:637.80px;height:12.8px;line-height:12.8px;font-size:12.8px;white-space:pre;color:#495057">H2</div>
<div style="left:1424.4px;top:630.8px;width:89.0px;height:26.200000000000045px;border:1px solid #ced4da;border-radius:3px;box-sizing:border-box;background:#fff"></div>
<div style="left:1434.9px;top:637.80px;height:12.8px;line-height:12.8px;font-size:12.8px;white-space:pre;color:#495057">6307</div>
<svg style="left:1497.4px;top:640.9px" width="10" height="7" viewBox="0 0 10 7"><path d="M1 1 L5 5 L9 1" stroke="#343a40" stroke-width="1.7" fill="none"/></svg>
<div style="left:1536.3000000000002px;top:630.8px;width:74.89999999999964px;height:26.200000000000045px;border:1px solid #ced4da;border-radius:3px;box-sizing:border-box;background:#fff"></div>
<div style="left:1546.8000000000002px;top:637.80px;height:12.8px;line-height:12.8px;font-size:12.8px;white-space:pre;color:#495057">null</div>
<svg style="left:1595.1999999999998px;top:640.9px" width="10" height="7" viewBox="0 0 10 7"><path d="M1 1 L5 5 L9 1" stroke="#343a40" stroke-width="1.7" fill="none"/></svg>
<div style="left:1634.1px;top:630.8px;width:94.09999999999991px;height:26.200000000000045px;border:1px solid #ced4da;border-radius:3px;box-sizing:border-box;background:#fff"></div>
<div style="left:1644.6px;top:637.80px;height:12.8px;line-height:12.8px;font-size:12.8px;white-space:pre;color:#495057">null</div>
<svg style="left:1712.1999999999998px;top:640.9px" width="10" height="7" viewBox="0 0 10 7"><path d="M1 1 L5 5 L9 1" stroke="#343a40" stroke-width="1.7" fill="none"/></svg>
<div style="left:1751.1999999999998px;top:630.8px;width:57.100000000000364px;height:26.200000000000045px;border:1px solid #ced4da;border-radius:3px;box-sizing:border-box;background:#fff"></div>
<div style="left:1761.6999999999998px;top:637.80px;height:12.8px;line-height:12.8px;font-size:12.8px;white-space:pre;color:#495057"><span style="display:inline-block;width:20.5px;overflow:hidden;vertical-align:top">True</span></div>
<svg style="left:1792.3000000000002px;top:640.9px" width="10" height="7" viewBox="0 0 10 7"><path d="M1 1 L5 5 L9 1" stroke="#343a40" stroke-width="1.7" fill="none"/></svg>
<div style="left:1830.5px;top:631.8px"><svg width="20" height="23" viewBox="0 0 20 23"><rect x="0.5" y="3" width="19" height="2.2" fill="#e00"/><path d="M6.5 3.5 V1 H13.5 V3.5" stroke="#e00" stroke-width="2" fill="none"/><path d="M2.5 6.5 H17.5 L16.5 22 H3.5 Z" stroke="#e00" stroke-width="2" fill="none"/><path d="M7 9 V19 M10 9 V19 M13 9 V19" stroke="#e00" stroke-width="1.7"/></svg></div>
<div style="left:1216px;top:668.1999999999999px;width:649px;height:1px;background:#dee2e6"></div>
<div style="left:1228.1999999999998px;top:681.2px;width:44.5px;height:26.200000000000045px;border:1px solid #ced4da;border-radius:3px;box-sizing:border-box;background:#e9ecef"></div>
<div style="left:1237px;top:688.20px;height:12.8px;line-height:12.8px;font-size:12.8px;white-space:pre;color:#495057">4</div>
<div style="left:1295.1999999999998px;top:681.2px;width:107.20000000000027px;height:26.200000000000045px;border:1px solid #ced4da;border-radius:3px;box-sizing:border-box;background:#e9ecef"></div>
<div style="left:1304.5px;top:688.20px;height:12.8px;line-height:12.8px;font-size:12.8px;white-space:pre;color:#495057">HH2</div>
<div style="left:1424.4px;top:681.2px;width:89.0px;height:26.200000000000045px;border:1px solid #ced4da;border-radius:3px;box-sizing:border-box;background:#fff"></div>
<div style="left:1434.9px;top:688.20px;height:12.8px;line-height:12.8px;font-size:12.8px;white-space:pre;color:#495057">6307</div>
<svg style="left:1497.4px;top:691.3000000000001px" width="10" height="7" viewBox="0 0 10 7"><path d="M1 1 L5 5 L9 1" stroke="#343a40" stroke-width="1.7" fill="none"/></svg>
<div style="left:1536.3000000000002px;top:681.2px;width:74.89999999999964px;height:26.200000000000045px;border:1px solid #ced4da;border-radius:3px;box-sizing:border-box;background:#fff"></div>
<div style="left:1546.8000000000002px;top:688.20px;height:12.8px;line-height:12.8px;font-size:12.8px;white-space:pre;color:#495057">null</div>
<svg style="left:1595.1999999999998px;top:691.3000000000001px" width="10" height="7" viewBox="0 0 10 7"><path d="M1 1 L5 5 L9 1" stroke="#343a40" stroke-width="1.7" fill="none"/></svg>
<div style="left:1634.1px;top:681.2px;width:94.09999999999991px;height:26.200000000000045px;border:1px solid #ced4da;border-radius:3px;box-sizing:border-box;background:#fff"></div>
<div style="left:1644.6px;top:688.20px;height:12.8px;line-height:12.8px;font-size:12.8px;white-space:pre;color:#495057">null</div>
<svg style="left:1712.1999999999998px;top:691.3000000000001px" width="10" height="7" viewBox="0 0 10 7"><path d="M1 1 L5 5 L9 1" stroke="#343a40" stroke-width="1.7" fill="none"/></svg>
<div style="left:1751.1999999999998px;top:681.2px;width:57.100000000000364px;height:26.200000000000045px;border:1px solid #ced4da;border-radius:3px;box-sizing:border-box;background:#fff"></div>
<div style="left:1761.6999999999998px;top:688.20px;height:12.8px;line-height:12.8px;font-size:12.8px;white-space:pre;color:#495057"><span style="display:inline-block;width:20.5px;overflow:hidden;vertical-align:top">True</span></div>
<svg style="left:1792.3000000000002px;top:691.3000000000001px" width="10" height="7" viewBox="0 0 10 7"><path d="M1 1 L5 5 L9 1" stroke="#343a40" stroke-width="1.7" fill="none"/></svg>
<div style="left:1830.5px;top:682.2px"><svg width="20" height="23" viewBox="0 0 20 23"><rect x="0.5" y="3" width="19" height="2.2" fill="#e00"/><path d="M6.5 3.5 V1 H13.5 V3.5" stroke="#e00" stroke-width="2" fill="none"/><path d="M2.5 6.5 H17.5 L16.5 22 H3.5 Z" stroke="#e00" stroke-width="2" fill="none"/><path d="M7 9 V19 M10 9 V19 M13 9 V19" stroke="#e00" stroke-width="1.7"/></svg></div>
<div style="left:1218px;top:735px;width:644.1999999999998px;height:30.799999999999955px;background:#ffa500;border-radius:3px"></div>
<div style="left:1218px;top:743.45px;height:14.3px;line-height:14.3px;font-size:14.3px;white-space:pre;width:644.1999999999998px;text-align:center;color:#fff"><svg width="13" height="13" viewBox="0 0 13 13" style="position:static;vertical-align:-2px;margin-right:4px"><path d="M0.8 0.8 H10 L12.2 3 V12.2 H0.8 Z" stroke="#fff" stroke-width="1.4" fill="none"/><rect x="3" y="1" width="6" height="3.5" fill="#fff"/><rect x="3" y="7.5" width="7" height="4" fill="none" stroke="#fff" stroke-width="1.1"/></svg>Update points data</div>
</div>
</body></html>
